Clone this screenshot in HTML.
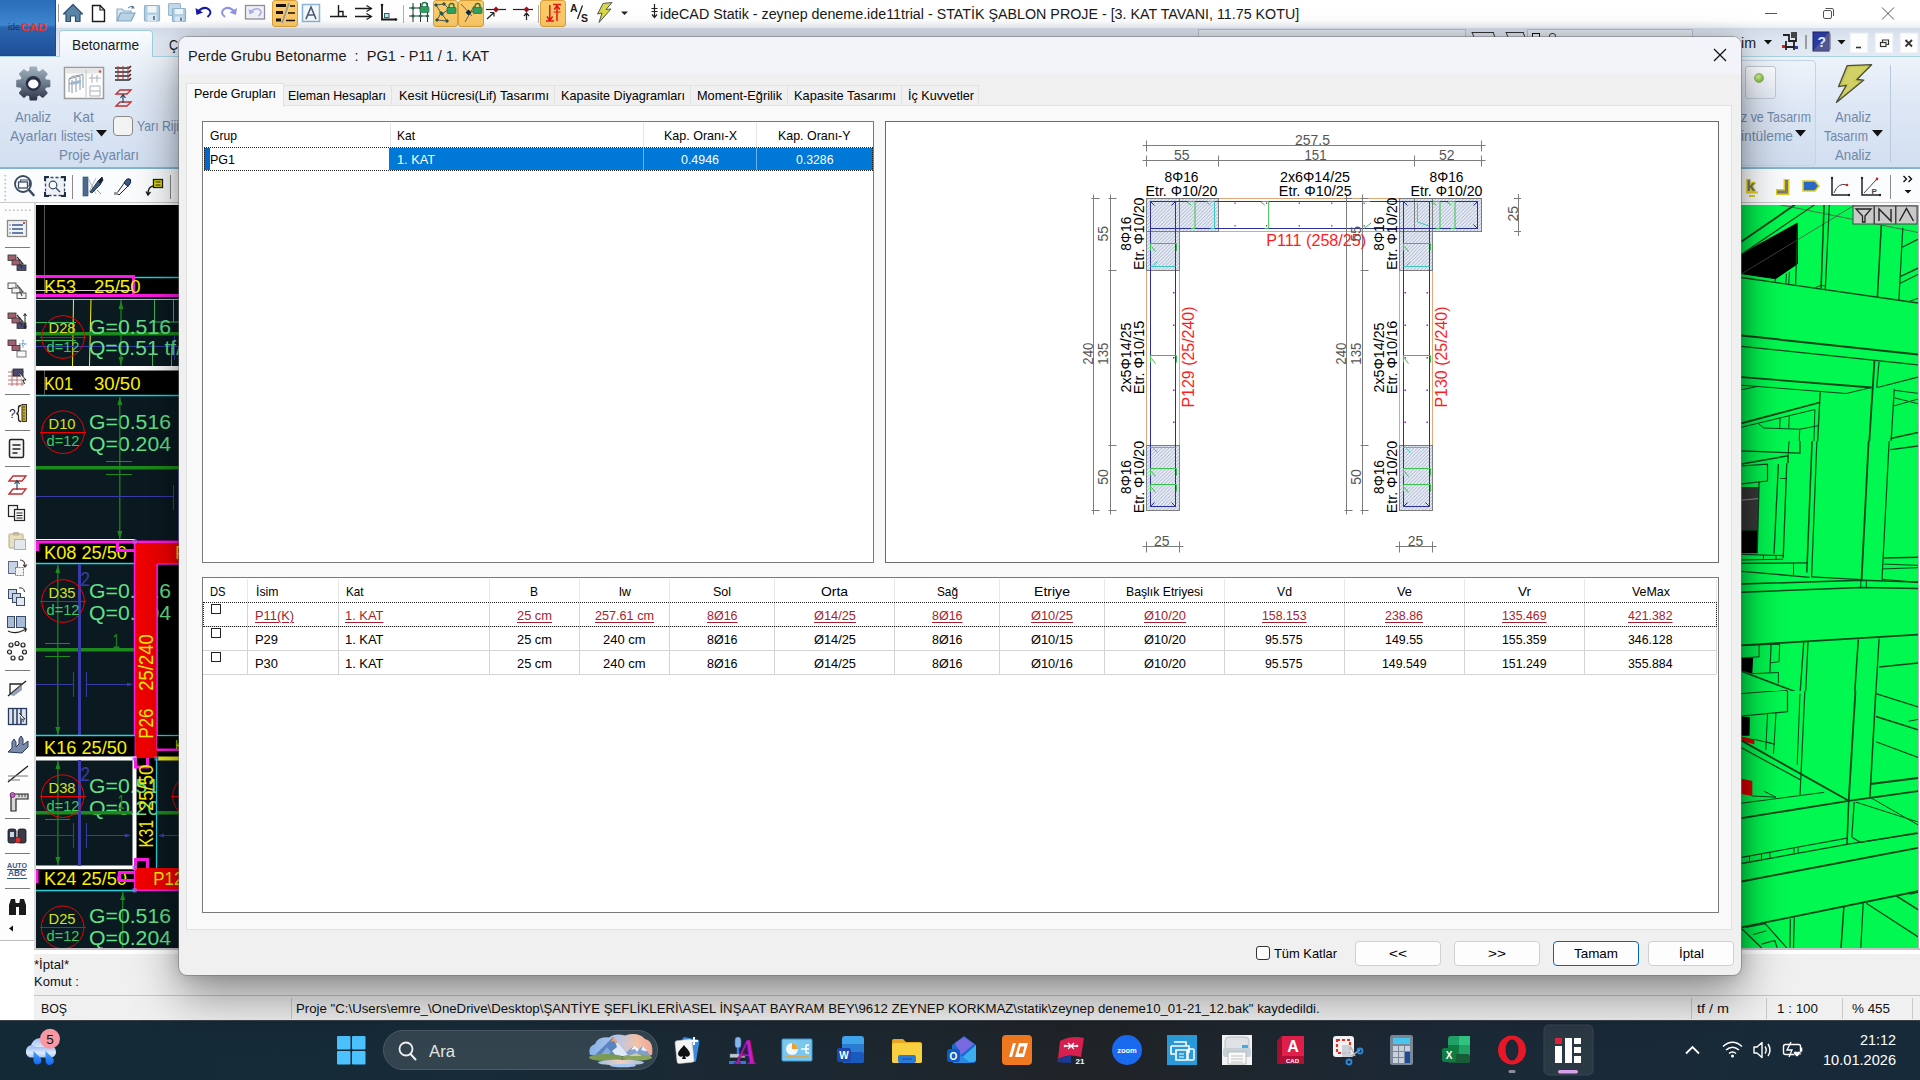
<!DOCTYPE html>
<html><head><meta charset="utf-8"><title>ideCAD Statik</title>
<style>
*{box-sizing:border-box;margin:0;padding:0}
html,body{width:1920px;height:1080px;overflow:hidden;background:#fff;font-family:"Liberation Sans",sans-serif;}
.abs{position:absolute}
#root{position:relative;width:1920px;height:1080px;overflow:hidden;background:#fff}
.t{position:absolute;white-space:pre;line-height:1;display:block}
svg{position:absolute;overflow:visible}
svg text{font-family:"Liberation Sans",sans-serif}
#titlebar{left:0;top:0;width:1920px;height:28px;background:linear-gradient(#ffffff 0%,#ffffff 72%,#eceff5 100%)}
#tabrow{left:0;top:28px;width:1920px;height:28px;background:linear-gradient(#d3dbe8 0%,#dde5f0 35%,#e3eaf4 100%)}
#ribbon{left:0;top:56px;width:1920px;height:113px;background:linear-gradient(#eef3fa 0%,#dfe8f5 40%,#d2dff1 100%);border-bottom:2px solid #86bacb}
#tb2{left:0;top:169px;width:1920px;height:36px;background:#fbfcfd}
#leftbar{left:0;top:203px;width:36px;height:746px;background:#fdfdfe}
#cad{left:36px;top:205px;width:143px;height:743px;background:#000;overflow:hidden}
#view3d{left:1741px;top:205px;width:177px;height:743px;background:#00f850;overflow:hidden}
#cmd{left:34px;top:954px;width:1886px;height:42px;background:#f0f0f0}
#status{left:34px;top:995px;width:1886px;height:25px;background:#f0f0f0;border-top:1px solid #c4c4c4}
#taskbar{left:0;top:1020px;width:1920px;height:60px;background:#1b2a35}
#dlg{left:179px;top:37px;width:1562px;height:938px;background:#f0f0f0;border-radius:8px;box-shadow:0 0 0 1px rgba(110,110,110,.5),0 22px 48px rgba(0,0,0,.40),0 0 16px rgba(0,0,0,.16);overflow:hidden}
#dlgtitle{left:0;top:0;width:1562px;height:37px;background:#f3f4f9}
</style></head>
<body><div id="root">
<div id="titlebar" class="abs"></div>
<div id="tabrow" class="abs"></div>
<div id="ribbon" class="abs"></div>
<div id="tb2" class="abs"></div>
<div id="leftbar" class="abs"></div>
<div id="cad" class="abs"><svg style="left:0;top:0" width="143" height="743" viewBox="36 205 143 743">
<rect x="36" y="298" width="143" height="68" fill="#0a1a20"/>
<rect x="36" y="396" width="143" height="144" fill="#0a1a20"/>
<rect x="36" y="564" width="99" height="171" fill="#0a1a20"/>
<rect x="36" y="760" width="97" height="106" fill="#0a1a20"/>
<rect x="157" y="760" width="22" height="108" fill="#0a1a20"/>
<rect x="36" y="891" width="143" height="57" fill="#0a1a20"/>
<path d="M44.5 205L44.5 298" stroke="#555" stroke-width="1" fill="none"/>
<path d="M44.5 370L44.5 396" stroke="#555" stroke-width="1" fill="none"/>
<path d="M44.5 541L44.5 564" stroke="#555" stroke-width="1" fill="none"/>
<path d="M44.5 736L44.5 757" stroke="#555" stroke-width="1" fill="none"/>
<path d="M44.5 869L44.5 890" stroke="#555" stroke-width="1" fill="none"/>
<path d="M36 290.5L134 290.5" stroke="#cfcfcf" stroke-width="1" fill="none"/>
<rect x="36" y="275" width="99" height="3" fill="#ff19e6"/>
<rect x="132" y="275" width="3" height="21" fill="#ff19e6"/>
<rect x="36" y="294" width="143" height="3" fill="#ff19e6"/>
<path d="M135 277.5L179 277.5" stroke="#1fd4e0" stroke-width="1.5" fill="none"/>
<text x="44.00" y="293.44" font-size="18" fill="#f8f000" text-anchor="start" textLength="32.0" lengthAdjust="spacingAndGlyphs">K53</text>
<text x="94.00" y="293.44" font-size="18" fill="#f8f000" text-anchor="start" textLength="46.5" lengthAdjust="spacingAndGlyphs">25/50</text>
<path d="M36 299.5L179 299.5" stroke="#bbb" stroke-width="1" fill="none"/>
<path d="M73.5 299L72.5 366" stroke="#f8f000" stroke-width="1" fill="none"/>
<path d="M91 299L89.5 366" stroke="#f8f000" stroke-width="1" fill="none"/>
<path d="M36 322.5L76 322.5" stroke="#39b85a" stroke-width="1" fill="none"/>
<path d="M36 340.5L76 340.5" stroke="#39b85a" stroke-width="1" fill="none"/>
<path d="M154.5 300L154.5 322" stroke="#39b85a" stroke-width="1" fill="none"/>
<path d="M154.5 322L179 322" stroke="#39b85a" stroke-width="1" fill="none"/>
<path d="M173.5 300L173.5 322" stroke="#39b85a" stroke-width="1" fill="none"/>
<path d="M152.5 345L152.5 366" stroke="#39b85a" stroke-width="1" fill="none"/>
<path d="M171.5 345L171.5 366" stroke="#39b85a" stroke-width="1" fill="none"/>
<rect x="36" y="332" width="143" height="3.5" fill="#1c8a1c"/>
<path d="M36 346.5L179 346.5" stroke="#3a3aa8" stroke-width="1" fill="none"/>
<path d="M174.5 335L174.5 360" stroke="#3a3aa8" stroke-width="1" fill="none"/>
<path d="M121 300L121 366" stroke="#1c8a1c" stroke-width="1.2" fill="none"/>
<path d="M121 301l-2.5 8h5zM121 365l-2.5 -8h5z" fill="#1c8a1c"/>
<circle cx="63" cy="337" r="21.3" fill="none" stroke="#f20000" stroke-width="1"/>
<path d="M40 337.5L86 337.5" stroke="#f20000" stroke-width="1" fill="none"/>
<text x="48.50" y="333.49" font-size="14.5" fill="#d8e020" text-anchor="start" textLength="27.0" lengthAdjust="spacingAndGlyphs">D28</text>
<text x="46.50" y="351.51" font-size="14" fill="#3cc864" text-anchor="start" textLength="33.0" lengthAdjust="spacingAndGlyphs">d=12</text>
<text x="89.00" y="333.98" font-size="19.5" fill="#63e087" text-anchor="start" textLength="82.0" lengthAdjust="spacingAndGlyphs">G=0.516</text>
<text x="89.00" y="355.28" font-size="19.5" fill="#63e087" text-anchor="start" textLength="93.0" lengthAdjust="spacingAndGlyphs">Q=0.51 tf/</text>
<rect x="36" y="366" width="143" height="4.5" fill="#fff"/>
<text x="44.00" y="389.94" font-size="18" fill="#f8f000" text-anchor="start" textLength="29.0" lengthAdjust="spacingAndGlyphs">K01</text>
<text x="94.00" y="389.94" font-size="18" fill="#f8f000" text-anchor="start" textLength="46.5" lengthAdjust="spacingAndGlyphs">30/50</text>
<path d="M36 395.5L179 395.5" stroke="#1fd4e0" stroke-width="1.3" fill="none"/>
<circle cx="63" cy="432.2" r="21.3" fill="none" stroke="#f20000" stroke-width="1"/>
<path d="M40 432.5L86 432.5" stroke="#f20000" stroke-width="1" fill="none"/>
<text x="48.50" y="428.89" font-size="14.5" fill="#d8e020" text-anchor="start" textLength="27.0" lengthAdjust="spacingAndGlyphs">D10</text>
<text x="46.50" y="446.21" font-size="14" fill="#3cc864" text-anchor="start" textLength="33.0" lengthAdjust="spacingAndGlyphs">d=12</text>
<text x="89.00" y="428.98" font-size="19.5" fill="#63e087" text-anchor="start" textLength="82.0" lengthAdjust="spacingAndGlyphs">G=0.516</text>
<text x="89.00" y="450.78" font-size="19.5" fill="#63e087" text-anchor="start" textLength="82.0" lengthAdjust="spacingAndGlyphs">Q=0.204</text>
<path d="M119.8 397L119.8 539" stroke="#1c8a1c" stroke-width="1.2" fill="none"/>
<path d="M119.8 397l-2.5 8h5zM119.8 539l-2.5 -8h5z" fill="#1c8a1c"/>
<rect x="36" y="466" width="143" height="3.5" fill="#1c8a1c"/>
<path d="M106 461.5L132 461.5" stroke="#1c8a1c" stroke-width="1" fill="none"/>
<path d="M106 474.5L132 474.5" stroke="#1c8a1c" stroke-width="1" fill="none"/>
<path d="M36 496.5L173.5 496.5" stroke="#3a3aa8" stroke-width="1" fill="none"/>
<path d="M173.5 485L173.5 510" stroke="#3a3aa8" stroke-width="1" fill="none"/>
<path d="M178.5 470L178.5 540" stroke="#3a3aa8" stroke-width="1" fill="none"/>
<rect x="36" y="540" width="143" height="24" fill="#000"/>
<path d="M36 539.5L135 539.5" stroke="#fff" stroke-width="1" fill="none"/>
<rect x="36" y="540.5" width="143" height="3" fill="#ff19e6"/>
<rect x="36" y="541" width="3" height="10" fill="#ff19e6"/>
<rect x="134.6" y="543" width="44.4" height="21" fill="#f20000"/>
<rect x="134.6" y="564" width="22.3" height="194" fill="#f20000"/>
<rect x="157" y="564" width="22" height="171" fill="#000"/>
<text x="44.00" y="559.24" font-size="18" fill="#f8f000" text-anchor="start" textLength="83.0" lengthAdjust="spacingAndGlyphs">K08 25/50</text>
<text x="175.50" y="559.24" font-size="18" fill="#f8f000" text-anchor="start" textLength="9.0" lengthAdjust="spacingAndGlyphs">P</text>
<path d="M117.5 543V550.5H135" fill="none" stroke="#ff19e6" stroke-width="3"/>
<path d="M36 563.5L135 563.5" stroke="#1fd4e0" stroke-width="1.3" fill="none"/>
<path d="M134.6 543L134.6 758" stroke="#ff19e6" stroke-width="1.5" fill="none"/>
<path d="M157 564L157 750" stroke="#ff19e6" stroke-width="1.5" fill="none"/>
<path d="M157 564L179 564" stroke="#ff19e6" stroke-width="1.5" fill="none"/>
<path d="M57.8 565L57.8 735" stroke="#1c8a1c" stroke-width="1.2" fill="none"/>
<path d="M57.8 565l-2.5 8h5zM57.8 735l-2.5 -8h5z" fill="#1c8a1c"/>
<path d="M45 643.5L70 643.5" stroke="#1c8a1c" stroke-width="1" fill="none"/>
<path d="M45 656.5L70 656.5" stroke="#1c8a1c" stroke-width="1" fill="none"/>
<rect x="36" y="648" width="98.6" height="3.5" fill="#1c8a1c"/>
<rect x="78" y="564" width="3" height="171" fill="#3a3aa8"/>
<text x="80.50" y="585.86" font-size="20" fill="#3a3aa8" text-anchor="start" textLength="9.5" lengthAdjust="spacingAndGlyphs">2</text>
<text x="112.50" y="648.28" font-size="19.5" fill="#1f7d1f" text-anchor="start" textLength="7.5" lengthAdjust="spacingAndGlyphs">1</text>
<path d="M36 684.5L73.5 684.5" stroke="#3a3aa8" stroke-width="1" fill="none"/>
<path d="M86.5 684.5L132 684.5" stroke="#3a3aa8" stroke-width="1" fill="none"/>
<path d="M73.5 672L73.5 697" stroke="#3a3aa8" stroke-width="1" fill="none"/>
<path d="M86.5 672L86.5 697" stroke="#3a3aa8" stroke-width="1" fill="none"/>
<path d="M133 684.5l-6 -2v4z" fill="#3a3aa8"/>
<circle cx="63" cy="601" r="21.3" fill="none" stroke="#f20000" stroke-width="1"/>
<path d="M40 601.5L86 601.5" stroke="#f20000" stroke-width="1" fill="none"/>
<text x="48.50" y="598.19" font-size="14.5" fill="#d8e020" text-anchor="start" textLength="27.0" lengthAdjust="spacingAndGlyphs">D35</text>
<text x="46.50" y="615.31" font-size="14" fill="#3cc864" text-anchor="start" textLength="33.0" lengthAdjust="spacingAndGlyphs">d=12</text>
<text x="89.00" y="597.98" font-size="19.5" fill="#63e087" text-anchor="start" textLength="82.0" lengthAdjust="spacingAndGlyphs">G=0.516</text><text x="89.00" y="619.68" font-size="19.5" fill="#63e087" text-anchor="start" textLength="82.0" lengthAdjust="spacingAndGlyphs">Q=0.204</text>
<rect x="134.6" y="564" width="22.3" height="194" fill="#f20000"/>
<path d="M134.6 543L134.6 758" stroke="#ff19e6" stroke-width="1.5" fill="none"/>
<path d="M157 564L157 750" stroke="#ff19e6" stroke-width="1.5" fill="none"/>
<text x="145.50" y="730.76" font-size="20" fill="#f8f000" text-anchor="middle" textLength="30.5" lengthAdjust="spacingAndGlyphs" transform="rotate(-90 145.50 723.60)">P26</text>
<text x="145.50" y="669.66" font-size="20" fill="#f8f000" text-anchor="middle" textLength="56.5" lengthAdjust="spacingAndGlyphs" transform="rotate(-90 145.50 662.50)">25/240</text>
<rect x="36" y="736" width="98.6" height="21" fill="#000"/>
<path d="M36 735.5L134.6 735.5" stroke="#1fd4e0" stroke-width="1.3" fill="none"/>
<text x="44.00" y="753.94" font-size="18" fill="#f8f000" text-anchor="start" textLength="83.0" lengthAdjust="spacingAndGlyphs">K16 25/50</text>
<rect x="157" y="736" width="22" height="24" fill="#000"/>
<path d="M157 735.5L179 735.5" stroke="#1fd4e0" stroke-width="1.3" fill="none"/>
<rect x="157" y="748.5" width="22" height="2.5" fill="#ff19e6"/>
<rect x="158" y="756.5" width="21" height="4" fill="#e8e820"/>
<text x="175.50" y="749.30" font-size="12" fill="#f8f000" text-anchor="start" textLength="5.0" lengthAdjust="spacingAndGlyphs">k</text>
<rect x="136.5" y="758" width="19.5" height="110" fill="#000"/>
<clipPath id="c4"><rect x="36" y="760" width="120" height="106"/></clipPath>
<g clip-path="url(#c4)"><text x="89.00" y="792.98" font-size="19.5" fill="#63e087" text-anchor="start" textLength="82.0" lengthAdjust="spacingAndGlyphs">G=0.516</text><text x="89.00" y="814.98" font-size="19.5" fill="#63e087" text-anchor="start" textLength="82.0" lengthAdjust="spacingAndGlyphs">Q=0.204</text></g>
<rect x="36" y="756.5" width="100" height="4" fill="#fff"/>
<rect x="132.5" y="756.5" width="4" height="113" fill="#fff"/>
<rect x="36" y="865.5" width="100" height="4" fill="#fff"/>
<path d="M156.5 758L156.5 868" stroke="#1fd4e0" stroke-width="1.3" fill="none"/>
<path d="M135.5 758V767H147.5V758" fill="none" stroke="#ff19e6" stroke-width="3"/>
<path d="M135.5 868V859.5H147.5V868" fill="none" stroke="#ff19e6" stroke-width="3"/>
<path d="M57.9 761L57.9 865" stroke="#1c8a1c" stroke-width="1.2" fill="none"/>
<path d="M57.9 761l-2.5 8h5zM57.9 865l-2.5 -8h5z" fill="#1c8a1c"/>
<path d="M45 819.5L70 819.5" stroke="#1c8a1c" stroke-width="1" fill="none"/>
<rect x="36" y="811" width="96.5" height="3.5" fill="#1c8a1c"/>
<rect x="157" y="811" width="22" height="3.5" fill="#1c8a1c"/>
<rect x="78" y="760" width="3" height="106" fill="#3a3aa8"/>
<text x="80.50" y="781.16" font-size="20" fill="#3a3aa8" text-anchor="start" textLength="9.5" lengthAdjust="spacingAndGlyphs">2</text>
<text x="117.60" y="808.98" font-size="19.5" fill="#1f7d1f" text-anchor="start" textLength="7.5" lengthAdjust="spacingAndGlyphs">1</text>
<path d="M36 835.5L73.5 835.5" stroke="#3a3aa8" stroke-width="1" fill="none"/>
<path d="M86.5 835.5L130 835.5" stroke="#3a3aa8" stroke-width="1" fill="none"/>
<path d="M73.5 823L73.5 848" stroke="#3a3aa8" stroke-width="1" fill="none"/>
<path d="M86.5 823L86.5 848" stroke="#3a3aa8" stroke-width="1" fill="none"/>
<path d="M131 835.5l-6 -2v4z" fill="#3a3aa8"/>
<path d="M160 835.5L179 835.5" stroke="#3a3aa8" stroke-width="1" fill="none"/>
<path d="M158 835.5l6 -2v4z" fill="#3a3aa8"/>
<circle cx="62.6" cy="796.2" r="21.3" fill="none" stroke="#f20000" stroke-width="1"/>
<path d="M40 796.5L86 796.5" stroke="#f20000" stroke-width="1" fill="none"/>
<circle cx="194" cy="796.2" r="21.3" fill="none" stroke="#f20000" stroke-width="1"/>
<path d="M171 796.5L179 796.5" stroke="#f20000" stroke-width="1" fill="none"/>
<text x="48.50" y="793.19" font-size="14.5" fill="#d8e020" text-anchor="start" textLength="27.0" lengthAdjust="spacingAndGlyphs">D38</text>
<text x="46.50" y="810.51" font-size="14" fill="#3cc864" text-anchor="start" textLength="33.0" lengthAdjust="spacingAndGlyphs">d=12</text>
<text x="145.50" y="840.86" font-size="20" fill="#f8f000" text-anchor="middle" textLength="27.4" lengthAdjust="spacingAndGlyphs" transform="rotate(-90 145.50 833.70)">K31</text>
<text x="145.50" y="794.96" font-size="20" fill="#f8f000" text-anchor="middle" textLength="46.6" lengthAdjust="spacingAndGlyphs" transform="rotate(-90 145.50 787.80)">25/50</text>
<rect x="36" y="869.5" width="98.6" height="21" fill="#000"/>
<rect x="36" y="870" width="2.5" height="13" fill="#ff19e6"/>
<text x="44.00" y="884.94" font-size="18" fill="#f8f000" text-anchor="start" textLength="83.0" lengthAdjust="spacingAndGlyphs">K24 25/50</text>
<rect x="134.6" y="868" width="44.4" height="22.5" fill="#f20000"/>
<path d="M134.6 868L134.6 891" stroke="#ff19e6" stroke-width="1.5" fill="none"/>
<path d="M134.6 890.3L179 890.3" stroke="#ff19e6" stroke-width="1.5" fill="none"/>
<path d="M134.6 872.5H119.5V880.5H134.6" fill="none" stroke="#ff19e6" stroke-width="3"/>
<text x="153.30" y="884.94" font-size="18" fill="#f8f000" text-anchor="start" textLength="30.0" lengthAdjust="spacingAndGlyphs">P12</text>
<path d="M36 890.5L134.6 890.5" stroke="#1fd4e0" stroke-width="1.3" fill="none"/>
<path d="M122.7 892L122.7 948" stroke="#1c8a1c" stroke-width="1.2" fill="none"/>
<path d="M122.7 892l-2.5 8h5z" fill="#1c8a1c"/>
<circle cx="62.6" cy="927.3" r="21.3" fill="none" stroke="#f20000" stroke-width="1"/>
<path d="M40 927.5L86 927.5" stroke="#f20000" stroke-width="1" fill="none"/>
<text x="48.50" y="923.69" font-size="14.5" fill="#d8e020" text-anchor="start" textLength="27.0" lengthAdjust="spacingAndGlyphs">D25</text>
<text x="46.50" y="941.01" font-size="14" fill="#3cc864" text-anchor="start" textLength="33.0" lengthAdjust="spacingAndGlyphs">d=12</text>
<text x="89.00" y="923.48" font-size="19.5" fill="#63e087" text-anchor="start" textLength="82.0" lengthAdjust="spacingAndGlyphs">G=0.516</text>
<text x="89.00" y="945.48" font-size="19.5" fill="#63e087" text-anchor="start" textLength="82.0" lengthAdjust="spacingAndGlyphs">Q=0.204</text>
<rect x="133.1" y="757.0" width="3" height="3" fill="none" stroke="#a070e0" stroke-width="1"/>
<rect x="155.0" y="757.0" width="3" height="3" fill="none" stroke="#a070e0" stroke-width="1"/>
<rect x="133.1" y="866.5" width="3" height="3" fill="none" stroke="#a070e0" stroke-width="1"/>
<rect x="133.1" y="888.8" width="3" height="3" fill="none" stroke="#a070e0" stroke-width="1"/>
<rect x="133.1" y="540.0" width="3" height="3" fill="none" stroke="#a070e0" stroke-width="1"/>
</svg></div>
<div id="view3d" class="abs"><svg style="left:0;top:0" width="177" height="743" viewBox="1741 205 177 743">
<defs><linearGradient id="gsh" x1="0" x2="1" y1="0" y2="0"><stop offset="0" stop-color="#000" stop-opacity=".12"/><stop offset="0.5" stop-color="#000" stop-opacity=".03"/><stop offset="1" stop-color="#000" stop-opacity="0"/></linearGradient></defs>
<clipPath id="vc1"><rect x="1741" y="205" width="177" height="236"/></clipPath><clipPath id="vc2"><rect x="1741" y="441" width="177" height="250"/></clipPath><clipPath id="vc3"><rect x="1741" y="691" width="177" height="257"/></clipPath>
<g clip-path="url(#vc1)">
<path d="M1741.2 254.4L1797.5 223.1L1797.5 263.7L1775.5 278.7L1741.2 273.6Z" stroke="#000" stroke-width="1" fill="#000" stroke-linejoin="round"/>
<path d="M1741.2 241.7L1795.2 204.6" stroke="#05451a" stroke-width="1.8" fill="none" stroke-linejoin="round"/>
<path d="M1741.2 254.4L1814.9 204.6" stroke="#05451a" stroke-width="1.2" fill="none" stroke-linejoin="round"/>
<path d="M1741.2 274.1L1855.4 204.6" stroke="#5a4a4a" stroke-width="0.8" fill="none" stroke-linejoin="round"/>
<path d="M1779.0 204.6L1917.9 232.4" stroke="#5a4a4a" stroke-width="0.8" fill="none" stroke-linejoin="round"/>
<path d="M1824.1 204.6L1821.1 288.0" stroke="#05451a" stroke-width="1.5" fill="none" stroke-linejoin="round"/>
<path d="M1829.4 204.6L1825.3 289.1" stroke="#05451a" stroke-width="1.2" fill="none" stroke-linejoin="round"/>
<path d="M1797.5 223.1L1795.6 284.5" stroke="#05451a" stroke-width="1.2" fill="none" stroke-linejoin="round"/>
<path d="M1775.5 278.7L1774.8 282.9" stroke="#05451a" stroke-width="1" fill="none" stroke-linejoin="round"/>
<path d="M1786.4 273.6L1785.9 283.8" stroke="#05451a" stroke-width="1" fill="none" stroke-linejoin="round"/>
<path d="M1789.4 271.8L1788.7 284.3" stroke="#05451a" stroke-width="1" fill="none" stroke-linejoin="round"/>
<path d="M1741.2 277.5L1917.9 303.0" stroke="#05451a" stroke-width="1.3" fill="none" stroke-linejoin="round"/>
<path d="M1814.9 288.0L1821.1 285.2L1825.3 286.1" stroke="#05451a" stroke-width="1" fill="none" stroke-linejoin="round"/>
<path d="M1881.3 225.5L1877.4 297.2" stroke="#05451a" stroke-width="1.5" fill="none" stroke-linejoin="round"/>
<path d="M1902.8 227.8L1898.9 300.0" stroke="#05451a" stroke-width="1.2" fill="none" stroke-linejoin="round"/>
<path d="M1901.7 247.5L1917.9 239.4" stroke="#05451a" stroke-width="1.2" fill="none" stroke-linejoin="round"/>
<path d="M1900.7 276.4L1917.9 268.3" stroke="#05451a" stroke-width="1.5" fill="none" stroke-linejoin="round"/>
<path d="M1900.3 283.3L1917.9 274.5" stroke="#05451a" stroke-width="1.2" fill="none" stroke-linejoin="round"/>
<path d="M1907.5 301.9L1917.9 298.4" stroke="#05451a" stroke-width="1" fill="none" stroke-linejoin="round"/>
<path d="M1741.2 335.4L1917.9 354.6" stroke="#05451a" stroke-width="2" fill="none" stroke-linejoin="round"/>
<path d="M1741.2 346.3L1917.9 364.8" stroke="#05451a" stroke-width="1.2" fill="none" stroke-linejoin="round"/>
<path d="M1741.2 377.1L1871.6 387.5" stroke="#05451a" stroke-width="1.8" fill="none" stroke-linejoin="round"/>
<path d="M1741.2 385.2L1846.1 393.5L1871.6 387.5" stroke="#05451a" stroke-width="1" fill="none" stroke-linejoin="round"/>
<path d="M1874.4 360.9L1868.8 450.0" stroke="#05451a" stroke-width="1.8" fill="none" stroke-linejoin="round"/>
<path d="M1879.0 362.0L1876.7 387.5" stroke="#05451a" stroke-width="1.2" fill="none" stroke-linejoin="round"/>
<path d="M1877.4 387.5L1917.9 377.1" stroke="#05451a" stroke-width="1.2" fill="none" stroke-linejoin="round"/>
<path d="M1741.2 389.8L1758.1 386.3" stroke="#05451a" stroke-width="1" fill="none" stroke-linejoin="round"/>
<path d="M1820.2 392.1L1817.2 450.0" stroke="#05451a" stroke-width="1.3" fill="none" stroke-linejoin="round"/>
<path d="M1741.2 423.4L1819.5 402.5" stroke="#05451a" stroke-width="1.8" fill="none" stroke-linejoin="round"/>
<path d="M1741.2 427.3L1814.9 409.5" stroke="#05451a" stroke-width="1" fill="none" stroke-linejoin="round"/>
<path d="M1814.9 409.5L1813.7 450.0" stroke="#05451a" stroke-width="1" fill="none" stroke-linejoin="round"/>
<path d="M1780.1 417.6L1779.7 428.0" stroke="#05451a" stroke-width="1" fill="none" stroke-linejoin="round"/>
<path d="M1789.4 415.3L1788.7 428.0" stroke="#05451a" stroke-width="1" fill="none" stroke-linejoin="round"/>
<path d="M1758.1 423.4L1763.9 428.0L1799.8 429.2L1818.3 425.7" stroke="#05451a" stroke-width="1" fill="none" stroke-linejoin="round"/>
<path d="M1799.8 429.2L1798.7 450.0" stroke="#05451a" stroke-width="1" fill="none" stroke-linejoin="round"/>
<path d="M1894.3 388.7L1890.6 450.0" stroke="#05451a" stroke-width="1.2" fill="none" stroke-linejoin="round"/>
<path d="M1894.3 390.3L1917.9 393.3" stroke="#05451a" stroke-width="1" fill="none" stroke-linejoin="round"/>
<path d="M1894.7 397.9L1917.9 403.7" stroke="#05451a" stroke-width="1" fill="none" stroke-linejoin="round"/>
<path d="M1893.6 406.0L1917.9 399.1" stroke="#05451a" stroke-width="1" fill="none" stroke-linejoin="round"/>
<path d="M1890.6 438.4L1917.9 432.6" stroke="#05451a" stroke-width="1.5" fill="none" stroke-linejoin="round"/>
<path d="M1891.2 443.1L1917.9 445.4" stroke="#05451a" stroke-width="1" fill="none" stroke-linejoin="round"/>
</g><g clip-path="url(#vc2)">
<path d="M1741.5 487.0L1759.1 487.0L1757.9 530.3L1741.5 530.3Z" stroke="none" stroke-width="0" fill="#3a3a3a" stroke-linejoin="round"/>
<path d="M1741.5 530.3L1757.9 530.3L1757.2 553.2L1741.5 553.2Z" stroke="none" stroke-width="0" fill="#000" stroke-linejoin="round"/>
<path d="M1741.5 500.2L1759.1 498.5" stroke="#999" stroke-width="1" fill="none" stroke-linejoin="round"/>
<path d="M1812.1 440.0L1806.8 572.5" stroke="#05451a" stroke-width="1.5" fill="none" stroke-linejoin="round"/>
<path d="M1816.9 440.0L1811.6 577.3" stroke="#05451a" stroke-width="1.2" fill="none" stroke-linejoin="round"/>
<path d="M1868.7 440.0L1861.5 580.9" stroke="#05451a" stroke-width="1.8" fill="none" stroke-linejoin="round"/>
<path d="M1889.2 440.0L1882.0 579.7" stroke="#05451a" stroke-width="1.2" fill="none" stroke-linejoin="round"/>
<path d="M1890.4 449.6L1918.1 446.0" stroke="#05451a" stroke-width="1.3" fill="none" stroke-linejoin="round"/>
<path d="M1741.5 450.8L1800.0 453.2L1800.0 440.0" stroke="#05451a" stroke-width="1.2" fill="none" stroke-linejoin="round"/>
<path d="M1741.5 464.1L1788.0 455.7L1788.0 462.9" stroke="#05451a" stroke-width="1.5" fill="none" stroke-linejoin="round"/>
<path d="M1741.5 466.0L1767.5 464.1L1767.5 481.0L1741.5 483.8" stroke="#05451a" stroke-width="1.2" fill="none" stroke-linejoin="round"/>
<path d="M1788.0 455.7L1789.2 440.0" stroke="#05451a" stroke-width="1" fill="none" stroke-linejoin="round"/>
<path d="M1759.1 481.0L1757.2 553.2" stroke="#05451a" stroke-width="1.3" fill="none" stroke-linejoin="round"/>
<path d="M1778.4 464.1L1774.0 553.7" stroke="#05451a" stroke-width="1.3" fill="none" stroke-linejoin="round"/>
<path d="M1786.8 462.9L1783.2 558.0" stroke="#05451a" stroke-width="1.3" fill="none" stroke-linejoin="round"/>
<path d="M1780.3 478.5L1786.8 478.5" stroke="#05451a" stroke-width="1" fill="none" stroke-linejoin="round"/>
<path d="M1741.5 554.4L1783.2 555.6" stroke="#05451a" stroke-width="1.2" fill="none" stroke-linejoin="round"/>
<path d="M1741.5 560.0L1783.2 559.2" stroke="#05451a" stroke-width="1" fill="none" stroke-linejoin="round"/>
<path d="M1763.4 555.2L1763.4 559.5" stroke="#05451a" stroke-width="1" fill="none" stroke-linejoin="round"/>
<path d="M1776.0 555.2L1776.0 559.5" stroke="#05451a" stroke-width="1" fill="none" stroke-linejoin="round"/>
<path d="M1741.5 563.3L1807.3 562.9" stroke="#05451a" stroke-width="1.3" fill="none" stroke-linejoin="round"/>
<path d="M1793.5 563.3L1793.5 574.9" stroke="#05451a" stroke-width="1" fill="none" stroke-linejoin="round"/>
<path d="M1741.5 571.3L1809.7 577.3" stroke="#05451a" stroke-width="1.3" fill="none" stroke-linejoin="round"/>
<path d="M1811.6 576.8L1861.5 579.7" stroke="#05451a" stroke-width="1.3" fill="none" stroke-linejoin="round"/>
<path d="M1741.5 584.1L1861.5 580.2L1918.1 582.1" stroke="#05451a" stroke-width="1.5" fill="none" stroke-linejoin="round"/>
<path d="M1741.5 592.3L1861.5 587.4L1918.1 588.4" stroke="#05451a" stroke-width="1.5" fill="none" stroke-linejoin="round"/>
<path d="M1860.8 580.9L1860.8 587.4" stroke="#05451a" stroke-width="1" fill="none" stroke-linejoin="round"/>
<path d="M1866.3 580.9L1866.3 587.4" stroke="#05451a" stroke-width="1" fill="none" stroke-linejoin="round"/>
<path d="M1883.9 558.0L1918.1 557.3" stroke="#05451a" stroke-width="1.5" fill="none" stroke-linejoin="round"/>
<path d="M1883.9 564.1L1918.1 565.3" stroke="#05451a" stroke-width="1" fill="none" stroke-linejoin="round"/>
<path d="M1883.2 568.9L1918.1 567.7" stroke="#05451a" stroke-width="1" fill="none" stroke-linejoin="round"/>
<path d="M1882.0 579.2L1918.1 582.6" stroke="#05451a" stroke-width="1" fill="none" stroke-linejoin="round"/>
<path d="M1741.5 645.3L1918.1 634.7" stroke="#05451a" stroke-width="1.8" fill="none" stroke-linejoin="round"/>
<path d="M1803.7 642.4L1800.0 694.2" stroke="#05451a" stroke-width="1.3" fill="none" stroke-linejoin="round"/>
<path d="M1808.0 641.9L1805.3 700.2" stroke="#05451a" stroke-width="1.2" fill="none" stroke-linejoin="round"/>
<path d="M1858.3 639.5L1854.2 700.2" stroke="#05451a" stroke-width="1.5" fill="none" stroke-linejoin="round"/>
<path d="M1879.1 638.5L1875.4 700.2" stroke="#05451a" stroke-width="1.3" fill="none" stroke-linejoin="round"/>
<path d="M1879.1 666.9L1918.1 663.1" stroke="#05451a" stroke-width="1.5" fill="none" stroke-linejoin="round"/>
<path d="M1741.5 658.0L1753.1 658.0L1752.3 673.7L1741.5 670.8Z" stroke="none" stroke-width="0" fill="#000" stroke-linejoin="round"/>
<path d="M1741.5 645.3L1779.6 644.3L1779.1 661.6L1771.1 662.8" stroke="#05451a" stroke-width="1" fill="none" stroke-linejoin="round"/>
<path d="M1771.1 644.8L1769.9 672.5" stroke="#05451a" stroke-width="1.2" fill="none" stroke-linejoin="round"/>
<path d="M1759.1 645.3L1759.1 656.8L1741.5 658.0" stroke="#05451a" stroke-width="1" fill="none" stroke-linejoin="round"/>
<path d="M1741.5 671.3L1800.0 693.4" stroke="#05451a" stroke-width="1.5" fill="none" stroke-linejoin="round"/>
<path d="M1752.3 673.7L1778.4 672.5L1778.4 683.3" stroke="#05451a" stroke-width="1" fill="none" stroke-linejoin="round"/>
<path d="M1741.5 695.4L1786.8 690.5L1786.8 700.2" stroke="#05451a" stroke-width="1.2" fill="none" stroke-linejoin="round"/>
<path d="M1875.9 691.7L1918.1 700.2" stroke="#05451a" stroke-width="1" fill="none" stroke-linejoin="round"/>
</g><g clip-path="url(#vc3)">
<path d="M1741.5 716.5L1749.9 717.0L1749.5 735.8L1741.5 735.8Z" stroke="none" stroke-width="0" fill="#000" stroke-linejoin="round"/>
<path d="M1741.5 736.5L1754.3 739.4L1754.3 744.2L1741.5 741.1Z" stroke="none" stroke-width="0" fill="#e00000" stroke-linejoin="round"/>
<path d="M1741.5 778.7L1752.3 781.1L1752.3 796.0L1741.5 794.1Z" stroke="none" stroke-width="0" fill="#e00000" stroke-linejoin="round"/>
<path d="M1855.5 690.0L1848.7 800.8" stroke="#05451a" stroke-width="1.8" fill="none" stroke-linejoin="round"/>
<path d="M1875.9 690.0L1869.9 797.2" stroke="#05451a" stroke-width="1.5" fill="none" stroke-linejoin="round"/>
<path d="M1804.9 690.0L1800.0 796.0" stroke="#05451a" stroke-width="1.2" fill="none" stroke-linejoin="round"/>
<path d="M1800.0 693.6L1797.2 764.7" stroke="#05451a" stroke-width="1" fill="none" stroke-linejoin="round"/>
<path d="M1741.5 693.6L1787.5 690.0" stroke="#05451a" stroke-width="1" fill="none" stroke-linejoin="round"/>
<path d="M1787.5 690.0L1787.5 711.7L1741.5 716.0" stroke="#05451a" stroke-width="1.2" fill="none" stroke-linejoin="round"/>
<path d="M1767.5 714.1L1765.8 750.2" stroke="#05451a" stroke-width="1" fill="none" stroke-linejoin="round"/>
<path d="M1776.0 712.9L1773.5 753.8" stroke="#05451a" stroke-width="1" fill="none" stroke-linejoin="round"/>
<path d="M1754.3 739.4L1774.7 744.2L1765.8 741.8" stroke="#05451a" stroke-width="1" fill="none" stroke-linejoin="round"/>
<path d="M1741.5 740.6L1848.7 800.8" stroke="#05451a" stroke-width="1.8" fill="none" stroke-linejoin="round"/>
<path d="M1741.5 747.8L1800.0 779.6" stroke="#05451a" stroke-width="1.2" fill="none" stroke-linejoin="round"/>
<path d="M1741.5 803.2L1824.1 792.4" stroke="#05451a" stroke-width="1" fill="none" stroke-linejoin="round"/>
<path d="M1752.3 796.0L1776.0 797.2L1763.9 791.2" stroke="#05451a" stroke-width="1" fill="none" stroke-linejoin="round"/>
<path d="M1741.5 818.2L1848.7 800.8L1918.1 791.2" stroke="#05451a" stroke-width="1.8" fill="none" stroke-linejoin="round"/>
<path d="M1870.4 784.0L1918.1 777.9" stroke="#05451a" stroke-width="2" fill="none" stroke-linejoin="round"/>
<path d="M1869.9 797.2L1918.1 824.9" stroke="#05451a" stroke-width="1" fill="none" stroke-linejoin="round"/>
<path d="M1875.9 693.6L1918.1 706.9" stroke="#05451a" stroke-width="1.2" fill="none" stroke-linejoin="round"/>
<path d="M1875.9 716.5L1918.1 729.7" stroke="#05451a" stroke-width="1.5" fill="none" stroke-linejoin="round"/>
<path d="M1875.9 741.8L1918.1 757.5" stroke="#05451a" stroke-width="1.2" fill="none" stroke-linejoin="round"/>
<path d="M1908.5 721.3L1918.1 719.4" stroke="#05451a" stroke-width="1" fill="none" stroke-linejoin="round"/>
<path d="M1848.7 800.8L1847.0 844.2" stroke="#05451a" stroke-width="1.5" fill="none" stroke-linejoin="round"/>
<path d="M1854.2 802.0L1851.8 837.4" stroke="#05451a" stroke-width="1.2" fill="none" stroke-linejoin="round"/>
<path d="M1855.5 802.0L1918.1 822.0" stroke="#05451a" stroke-width="1" fill="none" stroke-linejoin="round"/>
<path d="M1852.3 837.4L1860.3 842.3L1916.9 832.9" stroke="#05451a" stroke-width="1.2" fill="none" stroke-linejoin="round"/>
<path d="M1741.5 857.4L1847.0 838.2" stroke="#05451a" stroke-width="1.2" fill="none" stroke-linejoin="round"/>
<path d="M1741.5 863.5L1848.2 844.2L1918.1 833.3" stroke="#05451a" stroke-width="1.3" fill="none" stroke-linejoin="round"/>
<path d="M1749.5 856.2L1749.5 861.5" stroke="#05451a" stroke-width="1" fill="none" stroke-linejoin="round"/>
<path d="M1761.5 853.8L1761.5 859.4" stroke="#05451a" stroke-width="1" fill="none" stroke-linejoin="round"/>
<path d="M1769.9 852.6L1769.9 857.9" stroke="#05451a" stroke-width="1" fill="none" stroke-linejoin="round"/>
<path d="M1794.0 847.8L1794.0 853.8" stroke="#05451a" stroke-width="1" fill="none" stroke-linejoin="round"/>
<path d="M1798.1 847.1L1798.1 853.1" stroke="#05451a" stroke-width="1" fill="none" stroke-linejoin="round"/>
<path d="M1741.5 881.5L1918.1 847.8" stroke="#05451a" stroke-width="1.8" fill="none" stroke-linejoin="round"/>
<path d="M1741.5 927.3L1918.1 891.2" stroke="#05451a" stroke-width="1.8" fill="none" stroke-linejoin="round"/>
<path d="M1790.4 918.9L1789.9 947.8" stroke="#05451a" stroke-width="1.2" fill="none" stroke-linejoin="round"/>
<path d="M1794.3 917.7L1793.5 947.8" stroke="#05451a" stroke-width="1.2" fill="none" stroke-linejoin="round"/>
<path d="M1843.9 906.8L1841.0 947.8" stroke="#05451a" stroke-width="1.5" fill="none" stroke-linejoin="round"/>
<path d="M1863.2 903.2L1860.8 947.8" stroke="#05451a" stroke-width="1.2" fill="none" stroke-linejoin="round"/>
<path d="M1866.3 903.2L1918.1 936.9" stroke="#05451a" stroke-width="1.2" fill="none" stroke-linejoin="round"/>
<path d="M1896.4 896.0L1918.1 909.7" stroke="#05451a" stroke-width="1.5" fill="none" stroke-linejoin="round"/>
<path d="M1909.7 894.3L1918.1 892.4" stroke="#05451a" stroke-width="1" fill="none" stroke-linejoin="round"/>
<path d="M1741.5 928.5L1761.5 947.8" stroke="#05451a" stroke-width="1.3" fill="none" stroke-linejoin="round"/>
<path d="M1745.8 927.3L1765.1 923.7L1786.8 947.8" stroke="#05451a" stroke-width="1.2" fill="none" stroke-linejoin="round"/>
<path d="M1753.1 934.5L1766.3 930.9" stroke="#05451a" stroke-width="1" fill="none" stroke-linejoin="round"/>
<path d="M1761.5 944.2L1774.7 940.5L1777.2 947.8" stroke="#05451a" stroke-width="1.2" fill="none" stroke-linejoin="round"/>
</g>
<rect x="1741" y="205" width="34" height="743" fill="url(#gsh)"/>
<rect x="1853" y="206" width="21" height="18" fill="#c9c9c9" stroke="#444" stroke-width="1"/>
<rect x="1874.5" y="206" width="21" height="18" fill="#c9c9c9" stroke="#444" stroke-width="1"/>
<rect x="1896" y="206" width="21" height="18" fill="#c9c9c9" stroke="#444" stroke-width="1"/>
<path d="M1856 209H1871L1865 216V222H1862.5V216Z" fill="none" stroke="#222" stroke-width="1.3"/>
<path d="M1879 221V209L1891 221V209" fill="none" stroke="#222" stroke-width="1.4"/>
<path d="M1899.5 221L1906.5 208.5L1913.5 221" fill="none" stroke="#222" stroke-width="1.4"/>
</svg></div>
<div id="cmd" class="abs"></div>
<div id="status" class="abs"></div>
<div id="taskbar" class="abs"><div class="abs" style="left:0px;top:0px;width:1920px;height:60px;background:linear-gradient(90deg,#132a36 0%,#172b38 25%,#1d262e 48%,#202327 57%,#1b2936 75%,#172a3a 100%)"></div>
<div class="abs" style="left:0px;top:0px;width:1920px;height:1px;background:#3a4148"></div>
<svg style="left:0;top:0" width="1920" height="60" viewBox="0 0 1920 60"><defs><linearGradient id="cl" x1="0" y1="0" x2="0" y2="1"><stop offset="0" stop-color="#9fc0f4"/><stop offset="0.55" stop-color="#dfe9fb"/><stop offset="1" stop-color="#a9c6f4"/></linearGradient><linearGradient id="dr" x1="0" y1="0" x2="0" y2="1"><stop offset="0" stop-color="#4aa0ff"/><stop offset="1" stop-color="#1468f0"/></linearGradient></defs><g><circle cx="40" cy="27" r="9" fill="url(#cl)"/><circle cx="32" cy="31" r="6" fill="url(#cl)"/><circle cx="49" cy="31" r="6.500" fill="url(#cl)"/><rect x="26" y="27" width="30" height="10.500" rx="5.200" fill="url(#cl)"/><path d="M33.500 31L41 38.500a4 4 0 1 1-7.500 2Z" fill="url(#dr)"/><path d="M45.500 31L53.500 39a4.200 4.200 0 1 1-8 2Z" fill="url(#dr)"/><circle cx="50" cy="18.700" r="10" fill="#f898a4"/></g><text x="50" y="23.500" font-size="13.500" fill="#111" text-anchor="middle">5</text><g fill="#4cc2ff"><rect x="337" y="16" width="13.500" height="13.500" rx="1"/><rect x="352" y="16" width="13.500" height="13.500" rx="1"/><rect x="337" y="31" width="13.500" height="13.500" rx="1"/><rect x="352" y="31" width="13.500" height="13.500" rx="1"/></g><rect x="383.500" y="10.500" width="274" height="39" rx="19.500" fill="#33444f" stroke="#4c5a65" stroke-width="1"/><circle cx="406" cy="29" r="6.500" fill="none" stroke="#f0f0f0" stroke-width="1.800"/><path d="M410.500 34L415.500 39.500" stroke="#f0f0f0" stroke-width="2" stroke-linecap="round"/><defs><linearGradient id="sky" x1="0" y1="0" x2="1" y2="0"><stop offset="0" stop-color="#86b2ea"/><stop offset="0.45" stop-color="#b8c8ec"/><stop offset="0.75" stop-color="#f6c4a8"/><stop offset="1" stop-color="#f0a898"/></linearGradient><linearGradient id="lake" x1="0" y1="0" x2="1" y2="0"><stop offset="0" stop-color="#9cc0f0"/><stop offset="0.5" stop-color="#f4d0b8"/><stop offset="1" stop-color="#9cc0f0"/></linearGradient></defs><g><path d="M590 35Q587 27 595 24Q598 16 609 17.500Q615 12.500 625 15.500Q638 11.500 645 19Q654 21 652 35Z" fill="url(#sky)"/><path d="M622 36L634 25.500L639 29L643 26L651 36Z" fill="#7f9fd0"/><path d="M634 25.500L631 30L635 29L637 32L639 29Z" fill="#f4f6fa"/><path d="M643 26L641 30L645 31L647 31Z" fill="#eef2f8"/><path d="M594 36L613.400 16.800L629 36Z" fill="#5c84c0"/><path d="M613.400 16.800L617 27L612 31L616 36H629Z" fill="#dfe8f6"/><path d="M613.400 16.800L611 22L614 21L616 24L617.500 22Z" fill="#f0a468"/><path d="M600 36L607 27L611 32L608 36Z" fill="#88a8dc"/><ellipse cx="606" cy="37.500" rx="17" ry="3.500" fill="#7c9a54"/><ellipse cx="637" cy="37.500" rx="15" ry="3.200" fill="#8aa45c"/><path d="M628 36L636 33L642 36Z" fill="#c8ccb0"/><ellipse cx="621" cy="42.500" rx="23" ry="3" fill="url(#lake)"/><ellipse cx="623" cy="45.500" rx="13" ry="1.800" fill="#a8c8f4"/></g><g transform="translate(672,15)"><rect x="9" y="3" width="17" height="23" rx="2" fill="#3a8ae0" transform="rotate(10 17 14)"/><rect x="4" y="5" width="17" height="23" rx="2" fill="#f4f4f4" stroke="#ccc" stroke-width=".5" transform="rotate(-6 12 16)"/><path d="M12 10C9 14 6 16 6 19a3 3 0 0 0 5 2L10 24H14L13 21a3 3 0 0 0 5-2C18 16 15 14 12 10Z" fill="#111"/><path d="M22 2V10M18 6H26" stroke="#fff" stroke-width="2"/></g><g transform="translate(727,15)"><rect x="8" y="2" width="6" height="11" rx="3" fill="#8ab8ec" stroke="#3a6ab0" stroke-width=".6"/><path d="M11 13V20" stroke="#3a7ae0" stroke-width="2.500"/><rect x="3" y="19" width="15" height="3.500" fill="#c0c8d4" stroke="#808890" stroke-width=".5"/><path d="M2 27.500H19" stroke="#2a7ae8" stroke-width="3"/><text x="9" y="29" style="font-family:'Liberation Serif',serif;font-style:italic;font-weight:bold" font-size="36" fill="#c81cc8" stroke="#4a1060" stroke-width=".7" textLength="21" lengthAdjust="spacingAndGlyphs">A</text></g><g transform="translate(782,15)"><rect x="0" y="4" width="30" height="22" rx="1" fill="#7ac8f0" stroke="#3a98d0" stroke-width="1"/><circle cx="10" cy="14" r="6" fill="#f4f8fc"/><path d="M10 14V8A6 6 0 0 1 16 14Z" fill="#f0a030"/><path d="M19 14H24M24 10V18M24 10H27M24 14H27M24 18H27" stroke="#fff" stroke-width="1.500" fill="none"/><path d="M3 22H27" stroke="#f0a030" stroke-width="1.500"/></g><g transform="translate(837,15)"><rect x="5" y="1" width="22" height="27" rx="3" fill="#41a5ee"/><rect x="5" y="9" width="22" height="10" fill="#2b7cd3"/><rect x="5" y="17" width="22" height="11" rx="3" fill="#185abd"/><rect x="0" y="13" width="14" height="14" rx="2" fill="#1a4ab0"/><text x="7" y="24" font-size="10" font-weight="bold" fill="#fff" text-anchor="middle">W</text></g><g transform="translate(892,15)"><path d="M0 6a2 2 0 0 1 2-2H11L14 7H28a2 2 0 0 1 2 2V26a2 2 0 0 1-2 2H2a2 2 0 0 1-2-2Z" fill="#e8a820"/><rect x="0" y="8" width="30" height="20" rx="2" fill="#f8d040"/><rect x="6" y="20" width="18" height="8" rx="2" fill="#2a7ad8"/><path d="M10 24H20" stroke="#1a5ab0" stroke-width="1.500"/></g><g transform="translate(947,15)"><path d="M5 10L17 1L29 10V25a3 3 0 0 1-3 3H8a3 3 0 0 1-3-3Z" fill="#1a6ad0"/><path d="M8 8L17 2L27 9L14 20Z" fill="#7a6ae0"/><path d="M29 10L10 27H26a3 3 0 0 0 3-3Z" fill="#3ab0f0"/><path d="M5 14L24 28H8a3 3 0 0 1-3-3Z" fill="#2a8ae0"/><rect x="0" y="14" width="13" height="13" rx="3" fill="#0f5ac0"/><text x="6.500" y="24.500" font-size="10" font-weight="bold" fill="#fff" text-anchor="middle">O</text></g><g transform="translate(1002,15)"><rect x="0" y="0" width="30" height="30" rx="4" fill="#f07820"/><path d="M7 22L11 8H14L10 22Z" fill="#fff"/><path d="M13 22L17 8H26L22 22ZM18.500 11.500L16.500 18.500H20.500L22.500 11.500Z" fill="#fff" fill-rule="evenodd"/></g><g transform="translate(1057,15)"><path d="M3 6Q14 0 27 3L24 22Q12 18 1 24Z" fill="#d82050"/><path d="M1 24Q8 20 14 21L14 28Q6 28 0 27Z" fill="#1a3a90"/><path d="M8 11H20M11 8L14 11L11 14M17 8L14 11L17 14" stroke="#fff" stroke-width="1.300" fill="none"/><circle cx="8" cy="11" r="1.300" fill="#fff"/><circle cx="20" cy="11" r="1.300" fill="#fff"/><text x="23" y="29" font-size="8" font-weight="bold" fill="#fff" text-anchor="middle">21</text></g><g transform="translate(1112,15)"><circle cx="15" cy="15" r="15" fill="#1a6af0"/><text x="15" y="18" font-size="7.500" font-weight="bold" fill="#fff" text-anchor="middle">zoom</text></g><g transform="translate(1167,15)"><rect x="0" y="0" width="30" height="30" fill="#2a9ad8"/><path d="M7 7H19V11M4 11H22V18M4 11V19H8M9 15H20V25H9Z" fill="none" stroke="#fff" stroke-width="1.600"/><rect x="21" y="14" width="6" height="11" rx="1" fill="none" stroke="#fff" stroke-width="1.500"/><path d="M12 19H17M12 22H17" stroke="#fff" stroke-width="1.200"/></g><g transform="translate(1222,15)"><rect x="0" y="0" width="30" height="30" fill="#f4f4f4"/><path d="M3 14V6a4 4 0 0 1 4-4H23a4 4 0 0 1 4 4V14Z" fill="#e0e4e8" stroke="#b0b8c0" stroke-width=".8"/><rect x="1" y="13" width="28" height="9" rx="2" fill="#c8d0d8"/><rect x="20" y="10" width="6" height="3" fill="#3ab0e8"/><rect x="6" y="17" width="18" height="12" fill="#fafafa" stroke="#b0b0b0" stroke-width=".8"/><path d="M9 21H21M9 24H21M9 27H21" stroke="#c0c0c0" stroke-width="1"/></g><g transform="translate(1277,15)"><path d="M0 6L5 1H27V29H3Z" fill="#e0204a"/><path d="M0 6L5 1V27L3 29H0Z" fill="#a01030"/><rect x="3" y="21" width="24" height="8" fill="#b01038"/><text x="16" y="17" font-size="16" font-weight="bold" fill="#fff" text-anchor="middle">A</text><text x="15.500" y="27.500" font-size="6" font-weight="bold" fill="#fff" text-anchor="middle">CAD</text></g><g transform="translate(1332,15)"><rect x="1" y="1" width="21" height="21" rx="3" fill="#f4f4f6"/><rect x="5" y="5" width="13" height="13" fill="none" stroke="#e03020" stroke-width="2.200" stroke-dasharray="3 2"/><path d="M10 10H19V22H10Z" fill="#c8ccd4" opacity=".9"/><path d="M19 12L23 21M28 15L19 21" stroke="#b0b4bc" stroke-width="1.500"/><circle cx="28" cy="16" r="2.500" fill="none" stroke="#2a8ae0" stroke-width="1.800"/><circle cx="17" cy="27" r="2.500" fill="none" stroke="#2a8ae0" stroke-width="1.800"/></g><g transform="translate(1387,15)"><rect x="3" y="0" width="23" height="30" rx="2.500" fill="#7a8898"/><rect x="6" y="3" width="17" height="6" fill="#4ac8f0"/><g fill="#c8d0dc"><rect x="6" y="11" width="5" height="5"/><rect x="12" y="11" width="5" height="5"/><rect x="6" y="17" width="5" height="5"/><rect x="12" y="17" width="5" height="5"/><rect x="6" y="23" width="5" height="5"/><rect x="12" y="23" width="5" height="5"/><rect x="18" y="11" width="5" height="5"/></g><rect x="18" y="17" width="5" height="11" fill="#1a4a9a"/></g><g transform="translate(1442,15)"><rect x="6" y="1" width="22" height="27" rx="3" fill="#21a366"/><rect x="17" y="1" width="11" height="9" fill="#33c481"/><rect x="6" y="10" width="11" height="9" fill="#107c41"/><rect x="6" y="19" width="22" height="9" rx="3" fill="#185c37"/><rect x="0" y="13" width="14" height="14" rx="2" fill="#107c41"/><text x="7" y="24" font-size="10" font-weight="bold" fill="#fff" text-anchor="middle">X</text></g><g transform="translate(1497,15)"><ellipse cx="15" cy="15" rx="14" ry="14.500" fill="#e81828"/><ellipse cx="15" cy="15" rx="6.500" ry="10.500" fill="#1c2936"/></g><rect x="1508.500" y="50" width="7" height="3" rx="1.500" fill="#8a9098"/><rect x="1544" y="5" width="49" height="50" rx="5" fill="#2b3945" stroke="#3a4753" stroke-width="1"/><g transform="translate(1552,15)"><rect x="3" y="3" width="7" height="6" fill="#e8203a"/><rect x="3" y="11" width="7" height="17" fill="#fff"/><rect x="13" y="3" width="7" height="25" fill="#fff"/><rect x="22" y="3" width="7" height="6" fill="#fff"/><rect x="22" y="12" width="7" height="6" fill="#fff"/><rect x="22" y="21" width="7" height="7" fill="#fff"/></g><rect x="1558" y="50" width="20" height="3.500" rx="1.700" fill="#d8a0e8"/><path d="M1686 33.500L1692.500 27L1699 33.500" fill="none" stroke="#fff" stroke-width="1.800"/><path d="M1723 26.500Q1732.500 18 1742 26.500M1726 30Q1732.500 24.500 1739 30M1729 33.500Q1732.500 30.500 1736 33.500" fill="none" stroke="#fff" stroke-width="1.600"/><circle cx="1732.500" cy="36" r="1.500" fill="#fff"/><path d="M1754 27H1757L1762 22.500V37.500L1757 33H1754Z" fill="none" stroke="#fff" stroke-width="1.400" stroke-linejoin="round"/><path d="M1765 26.500Q1767.500 30 1765 33.500M1768 24Q1772 30 1768 36" fill="none" stroke="#fff" stroke-width="1.400"/><rect x="1783.500" y="24.500" width="17" height="10" rx="2" fill="none" stroke="#fff" stroke-width="1.400"/><path d="M1801.500 27.500V31.500" stroke="#fff" stroke-width="1.600"/><path d="M1791 22L1787 30H1792L1789 37" fill="none" stroke="#fff" stroke-width="1.300"/><path d="M1797 32C1795 30 1792.500 32 1794 34L1797 37L1800 34C1801.500 32 1799 30 1797 32Z" fill="#fff" stroke="#1c2936" stroke-width=".6"/></svg>
<span class="t" style="left:429.0px;top:23.2px;font-size:16.5px;color:#e4e4e4;transform:scaleX(1.013);transform-origin:0 0;">Ara</span>
<span class="t" style="left:1860.0px;top:12.9px;font-size:14.5px;color:#fff;transform:scaleX(0.992);transform-origin:0 0;">21:12</span>
<span class="t" style="left:1823.0px;top:32.9px;font-size:14.5px;color:#fff;transform:scaleX(1.006);transform-origin:0 0;">10.01.2026</span></div>
<div class="abs" style="left:0px;top:0px;width:56px;height:56px;background:linear-gradient(#2a6cb8 0%,#3f86cf 45%,#2a65b0 50%,#1f4f98 100%);border-right:1px solid #1d4a8c;border-bottom:1px solid #1d4a8c"></div>
<span class="t" style="left:8.0px;top:22.6px;font-size:9px;color:#1c2f55;">ide</span>
<span class="t" style="left:21.0px;top:21.6px;font-size:11px;color:#f0322e;font-weight:bold;transform:scaleX(1.091);transform-origin:0 0;">CAD</span>
<div class="abs" style="left:58px;top:4px;width:1px;height:18px;background:#9a9a9a"></div>
<div class="abs" style="left:272px;top:0px;width:26px;height:27px;background:#fbc968;border:1px solid #d9a13a;border-radius:3px"></div>
<div class="abs" style="left:433px;top:0px;width:25px;height:27px;background:#fbc968;border:1px solid #d9a13a;border-radius:3px"></div>
<div class="abs" style="left:458px;top:0px;width:26px;height:27px;background:#fbc968;border:1px solid #d9a13a;border-radius:3px"></div>
<div class="abs" style="left:540px;top:0px;width:26px;height:27px;background:#fbc968;border:1px solid #d9a13a;border-radius:3px"></div>
<div class="abs" style="left:403px;top:5px;width:1px;height:18px;background:#b0b0b0"></div>
<div class="abs" style="left:538px;top:5px;width:1px;height:18px;background:#b0b0b0"></div>
<svg style="left:0px;top:0px" width="660" height="28" viewBox="0 0 660 28"><path d="M63.5 14L73 4.5L82.5 14H80V21.5H75.5V16H70.5V21.5H66V14Z" fill="#5a83a8" stroke="#2e4f6e" stroke-width="1.2" stroke-linejoin="round"/><path d="M92.5 5.5H100L104.5 10V21.5H92.5Z" fill="#fff" stroke="#1a1a1a" stroke-width="1.4"/><path d="M100 5.5V10H104.5" fill="none" stroke="#1a1a1a" stroke-width="1.2"/><path d="M117 21V9H122L124 11H131V13" fill="#d6e6f2" stroke="#8fb0c8" stroke-width="1.2"/><path d="M117 21L120.5 13H135L131 21Z" fill="#b9d3e6" stroke="#7fa4c0" stroke-width="1.2"/><path d="M128 8Q131 5 134 7" fill="none" stroke="#5a80a0" stroke-width="1"/><path d="M132.5 5.5L135 8.5L131 8.5Z" fill="#5a80a0"/><rect x="144.5" y="5.5" width="15" height="15.5" rx="1" fill="#b4cfe2" stroke="#8fb2ca" stroke-width="1.2"/><rect x="147.5" y="6" width="9" height="6.5" fill="#eef5fa"/><rect x="147.500" y="15" width="9" height="6" fill="#dbe8f2"/><rect x="153" y="16" width="2" height="4" fill="#5f88a8"/><rect x="168.5" y="3.5" width="12" height="12" rx="1" fill="#c2d8e8" stroke="#98b8ce" stroke-width="1.1"/><rect x="172.5" y="8.5" width="13" height="13" rx="1" fill="#b4cfe2" stroke="#8fb2ca" stroke-width="1.2"/><rect x="175" y="9" width="8" height="5" fill="#eef5fa"/><rect x="175" y="16.5" width="8" height="5" fill="#dbe8f2"/><rect x="180" y="17.5" width="2" height="3.5" fill="#5f88a8"/><path d="M198 11.5Q204 5.5 209 9.5Q212.500 13 207.500 17" fill="none" stroke="#1a1aa8" stroke-width="2"/><path d="M195.500 8L196.500 15L203 12.5Z" fill="#1a1aa8"/><path d="M234.500 11.5Q228.500 5.500 223.500 9.5Q220 13 225 17" fill="none" stroke="#8f93e0" stroke-width="2"/><path d="M237 8L236 15L229.500 12.5Z" fill="#8f93e0"/><rect x="245.500" y="5.500" width="19" height="13.500" fill="#f2f2f6" stroke="#8e8e9a" stroke-width="1.3"/><path d="M251 11.500Q256 7 260 10Q262.500 13 258.500 16" fill="none" stroke="#a9aee6" stroke-width="1.600"/><path d="M248.500 9L249.500 14.500L254.500 12Z" fill="#a9aee6"/><path d="M276 5.500H286M276 12.500H283M276 20H281" stroke="#1a1208" stroke-width="3"/><path d="M290 6H295M288 13H295M286 20.500H295" stroke="#1a1208" stroke-width="1.500"/><path d="M289 3L282 23" stroke="#8a9aa8" stroke-width="1.600"/><rect x="302.500" y="4.500" width="17" height="17" fill="#f4f8fb" stroke="#8ab4d0" stroke-width="1.500"/><path d="M306 19L311 7L316 19M307.800 15H314.200" fill="none" stroke="#4a5a78" stroke-width="1.600"/><path d="M330 16.500H347M338.500 5V16.500M338.500 11.500H343V16.500" fill="none" stroke="#1a1a1a" stroke-width="1.400"/><path d="M355 8.500H371M355 16.500H371" stroke="#1a1a1a" stroke-width="1.300"/><path d="M366.500 5.500L371.500 8.500L366.500 11.500M366.500 13.500L371.500 16.500L366.500 19.500" fill="none" stroke="#1a1a1a" stroke-width="1.200"/><path d="M382 5V19.500H396" fill="none" stroke="#1a1a1a" stroke-width="1.800"/><rect x="384.500" y="13.500" width="4.500" height="4" fill="#cfe0ea" stroke="#2a6a6a" stroke-width="1"/><circle cx="382" cy="5" r="1.300" fill="#1a1a1a"/><circle cx="396" cy="19.500" r="1.300" fill="#1a1a1a"/><path d="M409 8H428M409 16H428M413 3V22M420.500 3V22M427.500 3V22" stroke="#333" stroke-width="1"/><path d="M411 8L413 6L415 8L413 10Z" fill="#1f6a4a"/><path d="M418.5 8L420.5 6L422.5 8L420.5 10Z" fill="#1f6a4a"/><path d="M411 16L413 14L415 16L413 18Z" fill="#1f6a4a"/><path d="M418.5 16L420.5 14L422.5 16L420.5 18Z" fill="#1f6a4a"/><path d="M425.5 16L427.5 14L429.5 16L427.5 18Z" fill="#1f6a4a"/><path d="M422 7V5a2.5 2.5 0 0 1 5 0V7" fill="none" stroke="#1e7a4a" stroke-width="1.4"/><rect x="420" y="6.5" width="9" height="6" rx="1" fill="#2fa060" stroke="#17603a" stroke-width=".6"/><path d="M436 5L444 4L449 9L442 14L447 21L437 20L441 13Z" fill="none" stroke="#555" stroke-width="1"/><path d="M434 5L436 3L438 5L436 7Z" fill="#1f5a4a"/><path d="M442 4L444 2L446 4L444 6Z" fill="#1f5a4a"/><path d="M447 9L449 7L451 9L449 11Z" fill="#1f5a4a"/><path d="M440 14L442 12L444 14L442 16Z" fill="#1f5a4a"/><path d="M445 21L447 19L449 21L447 23Z" fill="#1f5a4a"/><path d="M435 20L437 18L439 20L437 22Z" fill="#1f5a4a"/><path d="M439 13L441 11L443 13L441 15Z" fill="#1f5a4a"/><path d="M449 8V6a2.5 2.5 0 0 1 5 0V8" fill="none" stroke="#1e7a4a" stroke-width="1.4"/><rect x="447" y="7.5" width="9" height="6" rx="1" fill="#2fa060" stroke="#17603a" stroke-width=".6"/><path d="M461 4L472 16M474 6L465 22M468.500 12.500L478 10" stroke="#666" stroke-width="1"/><path d="M465.500 12.500L468.500 9.500L471.500 12.500L468.500 15.500Z" fill="#0c2a3a"/><path d="M475 8V6a2.5 2.5 0 0 1 5 0V8" fill="none" stroke="#1e7a4a" stroke-width="1.4"/><rect x="473" y="7.5" width="9" height="6" rx="1" fill="#2fa060" stroke="#17603a" stroke-width=".6"/><path d="M486 9.500H506" stroke="#222" stroke-width="1.200"/><path d="M493 9.500L496 6.500L499 9.500L496 12.500Z" fill="#a01020"/><path d="M487 19L494 12.500M494 12.500H490M494 12.500V16.500" fill="none" stroke="#222" stroke-width="1.200"/><path d="M513 9.500H533" stroke="#222" stroke-width="1.200"/><path d="M523.500 9.500L526.500 6.500L529.500 9.500L526.500 12.500Z" fill="#a01020"/><path d="M526.500 20V13M524 16L526.500 13L529 16" fill="none" stroke="#222" stroke-width="1.200"/><path d="M546 21H554M549.800 5V21M547 16.500L549.800 20.500L552.600 16.500" fill="none" stroke="#e01818" stroke-width="1.500"/><path d="M553 4.500H561M557 5V21M554.200 9.500L557 5.500L559.800 9.500" fill="none" stroke="#e01818" stroke-width="1.500"/><path d="M553.500 12H560.500" stroke="#e01818" stroke-width="1"/><text x="570" y="12" font-size="10.500" font-weight="bold" fill="#222">A</text><path d="M582.500 5.500L577.500 19" stroke="#222" stroke-width="1.300"/><text x="581" y="21.500" font-size="10.500" font-weight="bold" fill="#222">S</text><path d="M603 3.500L612 2.500L606 9.500L611 9L599 22.500L602 13L597.500 14Z" fill="#d8d84a" stroke="#555" stroke-width="1"/><path d="M621 11.500H628L624.500 15Z" fill="#222"/><path d="M651.500 8.500H657.500M651.500 11.500H657.500M654.500 4V17M652 14.500L654.500 17.500L657 14.500" fill="none" stroke="#222" stroke-width="1.200"/></svg>
<span class="t" style="left:660.0px;top:5.5px;font-size:15.5px;color:#1a1a1a;transform:scaleX(0.921);transform-origin:0 0;">ideCAD Statik - zeynep deneme.ide11trial - STATİK ŞABLON PROJE - [3. KAT TAVANI, 11.75 KOTU]</span>
<svg style="left:1760px;top:4px" width="140" height="20" viewBox="0 0 140 20"><path d="M5 9.5H17" stroke="#555" stroke-width="1"/><rect x="63.5" y="6.5" width="8" height="8" rx="1.5" fill="none" stroke="#555"/><path d="M65.5 4.5H72a1.5 1.5 0 0 1 1.5 1.5V12" fill="none" stroke="#555"/><path d="M122 3.5L134 15.5M134 3.5L122 15.5" stroke="#555" stroke-width="1"/></svg>
<div class="abs" style="left:0px;top:56px;width:1920px;height:1px;background:#a9d3e0"></div>
<div class="abs" style="left:59px;top:30px;width:94px;height:27px;background:linear-gradient(#fafcfe,#eef3fa);border:1px solid #9fd0de;border-bottom:none;border-radius:4px 4px 0 0"></div>
<span class="t" style="left:72.0px;top:36.9px;font-size:15.5px;color:#1a1a1a;transform:scaleX(0.884);transform-origin:0 0;">Betonarme</span>
<span class="t" style="left:168.5px;top:36.9px;font-size:15.5px;color:#1a1a1a;transform:scaleX(0.804);transform-origin:0 0;">Ç</span>
<div class="abs" style="left:1198px;top:29px;width:268px;height:12px;background:#dfe4ec;border:1px solid #b3bdce"></div>
<div class="abs" style="left:1527px;top:29px;width:166px;height:12px;background:#dfe4ec;border:1px solid #b3bdce"></div>
<div class="abs" style="left:1532px;top:33px;width:8px;height:6px;border:1.5px solid #111;background:#eee"></div>
<div class="abs" style="left:1549px;top:33px;width:7px;height:6px;border:1.5px solid #333;border-radius:3px 3px 0 0"></div>
<div class="abs" style="left:1473px;top:32px;width:22px;height:8px;border:1.5px solid #333;border-bottom:none;transform:skewX(20deg)"></div>
<div class="abs" style="left:1507px;top:32px;width:18px;height:8px;border:1.5px solid #333;border-bottom:none;transform:skewX(20deg)"></div>
<span class="t" style="left:1741.0px;top:34.9px;font-size:15.5px;color:#1a1a1a;transform:scaleX(0.917);transform-origin:0 0;">im</span>
<svg style="left:1741px;top:28px" width="179" height="28" viewBox="1741 28 179 28"><path d="M1764 40H1772L1768 44.500Z" fill="#111"/><path d="M1783 35H1789V41H1796V35M1786 41V50M1794 41V50M1783 47H1797" fill="none" stroke="#222" stroke-width="1.800"/><rect x="1791" y="32" width="6" height="6" fill="#444"/><rect x="1782" y="45" width="3" height="3" fill="#d02020"/><rect x="1795" y="46" width="3" height="3" fill="#2040d0"/><path d="M1806 35V49" stroke="#555" stroke-width="1"/><rect x="1813" y="32" width="16" height="19" fill="#2a3aa0" stroke="#1a2060" stroke-width="1"/><path d="M1813 51L1829 51L1831 49V34L1829 32" fill="#6a6a8a" opacity=".6"/><text x="1817.500" y="47" font-size="14" fill="#dfe4ff" font-weight="bold">?</text><path d="M1837.500 40H1845.500L1841.500 44.500Z" fill="#111"/><rect x="1850" y="33" width="18" height="20" fill="#fdfdfe" stroke="#e6eaf2" stroke-width="1"/><rect x="1875" y="33" width="18" height="20" fill="#fdfdfe" stroke="#e6eaf2" stroke-width="1"/><rect x="1900" y="33" width="18" height="20" fill="#fdfdfe" stroke="#e6eaf2" stroke-width="1"/><path d="M1856 47.500H1861" stroke="#333" stroke-width="1.600"/><rect x="1880.500" y="42.500" width="5.500" height="4" fill="none" stroke="#333" stroke-width="1.200"/><path d="M1882.500 42V40H1888.500V44.500H1886.500" fill="none" stroke="#333" stroke-width="1.200"/><path d="M1905.500 40L1912 46.500M1912 40L1905.500 46.500" stroke="#333" stroke-width="1.800"/></svg>
<div class="abs" style="left:0px;top:168px;width:1920px;height:1px;background:#7fb4c8"></div>
<span class="t" style="left:15.0px;top:110.4px;font-size:14.5px;color:#7088a8;transform:scaleX(0.912);transform-origin:0 0;">Analiz</span>
<span class="t" style="left:10.0px;top:129.4px;font-size:14.5px;color:#7088a8;transform:scaleX(0.946);transform-origin:0 0;">Ayarları</span>
<span class="t" style="left:73.0px;top:110.4px;font-size:14.5px;color:#7088a8;transform:scaleX(0.965);transform-origin:0 0;">Kat</span>
<span class="t" style="left:61.0px;top:129.4px;font-size:14.5px;color:#7088a8;transform:scaleX(0.883);transform-origin:0 0;">listesi</span>
<span class="t" style="left:137.0px;top:119.4px;font-size:14.5px;color:#7088a8;transform:scaleX(0.845);transform-origin:0 0;">Yarı Riji</span>
<span class="t" style="left:59.0px;top:148.4px;font-size:14.5px;color:#7088a8;transform:scaleX(0.922);transform-origin:0 0;">Proje Ayarları</span>
<div class="abs" style="left:113px;top:116px;width:20px;height:20px;border:1px solid #8a8a8a;border-radius:4px;background:#f3f3f3"></div>
<svg style="left:0px;top:56px" width="180" height="112" viewBox="0 56 180 112"><defs><linearGradient id="gg" x1="0" y1="66" x2="0" y2="103" gradientUnits="userSpaceOnUse"><stop offset="0" stop-color="#a4b2bd"/><stop offset="0.45" stop-color="#6f7f8f"/><stop offset="1" stop-color="#23263c"/></linearGradient></defs><path d="M30.13 71.60L30.56 67.53L36.04 67.53L36.47 71.60L39.48 72.85L42.65 70.27L46.53 74.15L43.95 77.32L45.20 80.33L49.27 80.76L49.27 86.24L45.20 86.67L43.95 89.68L46.53 92.85L42.65 96.73L39.48 94.15L36.47 95.40L36.04 99.47L30.56 99.47L30.13 95.40L27.12 94.15L23.95 96.73L20.07 92.85L22.65 89.68L21.40 86.67L17.33 86.24L17.33 80.76L21.40 80.33L22.65 77.32L20.07 74.15L23.95 70.27L27.12 72.85Z" fill="url(#gg)" stroke="url(#gg)" stroke-width="2.200" stroke-linejoin="round"/><circle cx="33.3" cy="83.5" r="7.6" fill="#2c3046"/><ellipse cx="33.3" cy="84.0" rx="5.2" ry="4.4" fill="#f8fafc"/><rect x="64.500" y="67.500" width="39" height="31" fill="#fdfdfd" stroke="#9c9c9c" stroke-width="1.500"/><rect x="65.500" y="68.500" width="37" height="5" fill="#e6e6e6"/><path d="M69 92V79L80 76V90M69 84L80 81M72 93V80M76 92V78M69 79L72 76.500L83 74.500V88" fill="none" stroke="#8a96a6" stroke-width="1"/><path d="M71 82L81 80V83L71 85Z" fill="#9ab6d6"/><path d="M86 70V97" stroke="#c4c4c4" stroke-width="1"/><path d="M89 78H101M92 74V83M97 75V82M90 86H100V96H90ZM90 91H100" fill="none" stroke="#a9b2be" stroke-width="1"/><circle cx="100" cy="71.500" r="1.300" fill="#e05050"/><path d="M115 68H129L131 66M115 72H129L131 70M115 76H129L131 74M115 80H129L131 78" fill="none" stroke="#2a2a2a" stroke-width="1.500"/><path d="M118 66V80M123 66V80M128 66V80" stroke="#c03030" stroke-width="1"/><path d="M116 94L120 90H131L127 94ZM116 106L120 102H131L127 106Z" fill="none" stroke="#c03030" stroke-width="1.300"/><path d="M123 103V95M120.500 98L123 94.500L125.500 98" fill="none" stroke="#2a4a6a" stroke-width="1.200"/><path d="M96 130H107L101.500 136.500Z" fill="#111"/></svg>
<div class="abs" style="left:1700px;top:60px;width:116px;height:106px;border:1px solid #c5d3e6;border-radius:4px;background:linear-gradient(#eef3fa,#dbe5f3 50%,#d0ddef)"></div>
<div class="abs" style="left:1745px;top:66px;width:31px;height:33px;border:1px solid #c0c8d8;border-radius:3px;background:linear-gradient(#fbfcfe,#e4eaf4)"></div>
<div class="abs" style="left:1754px;top:73px;width:10px;height:10px;border-radius:50%;background:radial-gradient(circle at 40% 35%,#d8f0a0,#8cc84a 60%,#6aa030);border:1px solid #9ab070"></div>
<span class="t" style="left:1741.0px;top:110.4px;font-size:14.5px;color:#7088a8;transform:scaleX(0.854);transform-origin:0 0;">z ve Tasarım</span>
<span class="t" style="left:1741.0px;top:129.4px;font-size:14.5px;color:#7088a8;transform:scaleX(0.949);transform-origin:0 0;">intüleme</span>
<span class="t" style="left:1835.0px;top:110.4px;font-size:14.5px;color:#7088a8;transform:scaleX(0.912);transform-origin:0 0;">Analiz</span>
<span class="t" style="left:1824.0px;top:129.4px;font-size:14.5px;color:#7088a8;transform:scaleX(0.853);transform-origin:0 0;">Tasarım</span>
<span class="t" style="left:1835.0px;top:148.4px;font-size:14.5px;color:#7088a8;transform:scaleX(0.912);transform-origin:0 0;">Analiz</span>
<div class="abs" style="left:1890px;top:65px;width:1px;height:97px;background:#b9c8dc"></div>
<svg style="left:1741px;top:56px" width="179" height="112" viewBox="1741 56 179 112"><path d="M1847.2 65.6L1871.6 64.7L1856.9 79.5L1863.8 80.1L1836.4 102.4L1846.3 85.3L1838.6 86.6Z" fill="#c4c452" stroke="#4a4f38" stroke-width="1.300" stroke-linejoin="round"/><path d="M1849 67.500L1868 66.500L1853 81.500L1859 82L1841 97L1849 83.500L1842 84.500Z" fill="#dcdc7a" opacity=".55"/><path d="M1795 130H1806L1800.500 136.500Z" fill="#111"/><path d="M1872 130H1883L1877.500 136.500Z" fill="#111"/></svg>
<div class="abs" style="left:0px;top:202px;width:1920px;height:1px;background:#c9c9c9"></div>
<svg style="left:0px;top:169px" width="180" height="34" viewBox="0 169 180 34"><rect x="4.500" y="175" width="1.500" height="1.500" fill="#b8b8b8"/><rect x="4.500" y="179" width="1.500" height="1.500" fill="#b8b8b8"/><rect x="4.500" y="183" width="1.500" height="1.500" fill="#b8b8b8"/><rect x="4.500" y="187" width="1.500" height="1.500" fill="#b8b8b8"/><rect x="4.500" y="191" width="1.500" height="1.500" fill="#b8b8b8"/><rect x="4.500" y="195" width="1.500" height="1.500" fill="#b8b8b8"/><rect x="4.500" y="199" width="1.500" height="1.500" fill="#b8b8b8"/><circle cx="23" cy="184" r="8" fill="none" stroke="#3a4a60" stroke-width="1.800"/><rect x="18.500" y="182" width="9" height="6" fill="none" stroke="#3a4a60" stroke-width="1.300"/><path d="M20.500 182V180H29.500V186H27.500" fill="none" stroke="#3a4a60" stroke-width="1.100"/><path d="M29 190L33.500 195" stroke="#3a4a60" stroke-width="2.600" stroke-linecap="round"/><rect x="45.500" y="177.500" width="19" height="18" fill="#eef2f8" stroke="#3a4a60" stroke-width="1.300" stroke-dasharray="3 2"/><path d="M45 181V177H49M61 177H65V181M65 192V196H61M49 196H45V192" fill="none" stroke="#1e2e44" stroke-width="2"/><circle cx="53" cy="185" r="3.800" fill="#f8fafc" stroke="#3a4a60" stroke-width="1.200"/><path d="M56 188L60 192" stroke="#3a4a60" stroke-width="1.500"/><path d="M72.500 175V199M170.500 175V199" stroke="#8a8a8a" stroke-width="1"/><rect x="83" y="177" width="5" height="19" fill="#4a6a90" stroke="#2a4a70" stroke-width=".6"/><path d="M88 178L96 194M96 178L88 194" stroke="#a0a8b0" stroke-width=".8"/><path d="M90 192L98 181L102 177L103 180L100 185L92 193Z" fill="#3a5a80" stroke="#1a2a40" stroke-width=".8"/><path d="M98 181L102 177L103 180L100 184Z" fill="#16202e"/><path d="M97 190L101 194" stroke="#70b070" stroke-width="1"/><path d="M117 193L125 182L128 186L119 195Z" fill="#f4f6fa" stroke="#222" stroke-width="1"/><path d="M124 183Q127 177 130.500 179.500Q132 182 128 186.500Z" fill="#3a5a88" stroke="#16202e" stroke-width="1"/><rect x="114" y="192" width="4" height="3" fill="#9a9a9a"/><rect x="153.500" y="179.500" width="9" height="8" fill="#e6e000" stroke="#1a1a1a" stroke-width="1.300"/><path d="M155.500 182H160.500M155.500 185H160.500" stroke="#1a1a1a" stroke-width="1"/><path d="M153 186Q148 187 148 194M146 191.500L148 195L150.500 192" fill="none" stroke="#1a1a1a" stroke-width="1.300"/></svg><svg style="left:1741px;top:169px" width="179" height="34" viewBox="1741 169 179 34"><path d="M1746 192.500H1758M1749 196H1755" stroke="#e0d020" stroke-width="2.200"/><text x="1746.500" y="191" font-size="15" font-weight="bold" fill="#6f6f6f" stroke="#e0d020" stroke-width="2.400" paint-order="stroke" stroke-linejoin="round">k</text><path d="M1786.500 179V192H1776" fill="none" stroke="#e0d020" stroke-width="6" stroke-linejoin="miter"/><path d="M1786.500 180V192H1777" fill="none" stroke="#7a7a7a" stroke-width="3"/><path d="M1803 181H1815L1819 186L1815 191H1803Z" fill="#2a68c8" stroke="#e0d020" stroke-width="1.600"/><path d="M1832 178V195H1849" fill="none" stroke="#222" stroke-width="1.500"/><path d="M1834 193Q1838 182 1847 185" fill="none" stroke="#444" stroke-width="1"/><circle cx="1847" cy="185" r="1.300" fill="#d02020"/><circle cx="1832" cy="178" r="1.200" fill="#222"/><circle cx="1849" cy="195" r="1.200" fill="#222"/><path d="M1862 178V195H1880" fill="none" stroke="#222" stroke-width="1.500"/><path d="M1864 193L1876 180" fill="none" stroke="#444" stroke-width="1"/><circle cx="1877" cy="179" r="1.400" fill="#d02020"/><text x="1871.500" y="194" font-size="8" font-weight="bold" fill="#444">P</text><circle cx="1862" cy="178" r="1.200" fill="#222"/><circle cx="1880" cy="195" r="1.200" fill="#222"/><path d="M1890.500 175V199" stroke="#8a8a8a" stroke-width="1"/><path d="M1903.500 176L1906.500 179L1903.500 182M1908.500 176L1911.500 179L1908.500 182" fill="none" stroke="#111" stroke-width="1.400"/><path d="M1904.500 190H1911.500L1908 193.500Z" fill="#111"/></svg>
<div class="abs" style="left:35px;top:205px;width:1px;height:744px;background:#e0e0e0"></div>
<div class="abs" style="left:0px;top:940px;width:36px;height:1px;background:#bdbdbd"></div>
<div class="abs" style="left:0px;top:941px;width:34px;height:79px;background:#fff"></div>
<svg style="left:0px;top:205px" width="36" height="745" viewBox="0 205 36 745"><rect x="5" y="209.500" width="1.500" height="1.500" fill="#b8b8b8"/><rect x="9" y="209.500" width="1.500" height="1.500" fill="#b8b8b8"/><rect x="13" y="209.500" width="1.500" height="1.500" fill="#b8b8b8"/><rect x="17" y="209.500" width="1.500" height="1.500" fill="#b8b8b8"/><rect x="21" y="209.500" width="1.500" height="1.500" fill="#b8b8b8"/><rect x="25" y="209.500" width="1.500" height="1.500" fill="#b8b8b8"/><rect x="29" y="209.500" width="1.500" height="1.500" fill="#b8b8b8"/><path d="M5 247.5H30" stroke="#7a7a7a" stroke-width="1"/><path d="M5 394.5H30" stroke="#7a7a7a" stroke-width="1"/><path d="M5 430.5H30" stroke="#7a7a7a" stroke-width="1"/><path d="M5 466.5H30" stroke="#7a7a7a" stroke-width="1"/><path d="M5 670.5H30" stroke="#7a7a7a" stroke-width="1"/><path d="M5 818.5H30" stroke="#7a7a7a" stroke-width="1"/><path d="M5 853.5H30" stroke="#7a7a7a" stroke-width="1"/><path d="M5 888.5H30" stroke="#7a7a7a" stroke-width="1"/><rect x="7.500" y="220.500" width="19" height="16" fill="#f2f2f4" stroke="#8a8a8a" stroke-width="1.300"/><path d="M12 225H23M12 229H23M12 233H23" stroke="#3a5a8a" stroke-width="1.300"/><path d="M9.500 225H10.500M9.500 229H10.500M9.500 233H10.500" stroke="#3a5a8a" stroke-width="1.300"/><rect x="23" y="222" width="2" height="2" fill="#e04040"/><rect x="8" y="255" width="8" height="5.500" fill="#a06070" stroke="#333" stroke-width=".8"/><rect x="12" y="260" width="8" height="5" fill="#a06070" stroke="#333" stroke-width=".8"/><rect x="17" y="265" width="9" height="5.500" fill="#4a4a70" stroke="#333" stroke-width=".8"/><path d="M17 257L23 264L20.500 264L22 268" fill="none" stroke="#333" stroke-width="1.200"/><rect x="8" y="283" width="8" height="5.500" fill="#f4f4f4" stroke="#333" stroke-width=".8"/><rect x="12" y="288" width="8" height="5" fill="#f4f4f4" stroke="#333" stroke-width=".8"/><rect x="17" y="293" width="9" height="5.500" fill="#f4f4f4" stroke="#333" stroke-width=".8"/><path d="M17 285L23 292L20.500 292L22 296" fill="none" stroke="#555" stroke-width="1.200"/><rect x="8" y="313" width="8" height="5.500" fill="#a06070" stroke="#333" stroke-width=".8"/><rect x="12" y="318" width="8" height="5" fill="#a06070" stroke="#333" stroke-width=".8"/><rect x="17" y="323" width="9" height="5.500" fill="#4a4a70" stroke="#333" stroke-width=".8"/><path d="M17 315L23 322L20.500 322L22 326" fill="none" stroke="#333" stroke-width="1.200"/><path d="M25 314V328M23.500 316L25 313.500L26.500 316M23.500 326L25 328.500L26.500 326" fill="none" stroke="#222" stroke-width="1"/><rect x="8" y="340" width="8" height="5.500" fill="#a06070" stroke="#333" stroke-width=".8"/><rect x="12" y="345.500" width="8" height="5" fill="#a06070" stroke="#333" stroke-width=".8"/><rect x="17" y="351" width="9" height="6" fill="#f8f8f8" stroke="#555" stroke-width=".8"/><path d="M23 340V348M19 344H27" stroke="#2a6a9a" stroke-width="1" stroke-dasharray="1.500 1"/><path d="M8 372H24M8 376H24M8 380H24M8 384H24M12 370V386M17 370V386M22 370V386" stroke="#c07070" stroke-width="1"/><rect x="13" y="369" width="10" height="7" fill="#4a4a70" stroke="#222" stroke-width=".8"/><path d="M19 372L26 380L23 380L24.500 384" fill="#fff" stroke="#222" stroke-width="1"/><text x="9" y="418" font-size="12" fill="#222">?</text><path d="M21 405.500Q18.500 405.500 18.500 408V411Q18.500 413 16.500 413.500Q18.500 414 18.500 416V419Q18.500 421.500 21 421.500" fill="none" stroke="#222" stroke-width="1.300"/><rect x="22" y="404.500" width="4.500" height="17" fill="#c8b020" stroke="#222" stroke-width=".9"/><path d="M23 407H25M23 410H25M23 413H25M23 416H25M23 419H25" stroke="#222" stroke-width=".7"/><rect x="9.500" y="439.500" width="14" height="18" rx="1.500" fill="#f4f4f4" stroke="#222" stroke-width="1.500"/><path d="M12.500 445H20.500M12.500 449H20.500M12.500 453H17.500" stroke="#222" stroke-width="1.500"/><path d="M9 481L13 476H26L22 481ZM9 494L13 489H26L22 494Z" fill="none" stroke="#c03030" stroke-width="1.300"/><path d="M17 490V481M14.500 484L17 480.500L19.500 484" fill="none" stroke="#2a4a6a" stroke-width="1.200"/><rect x="8.500" y="505.500" width="9" height="11" fill="#f4f4f4" stroke="#222" stroke-width="1.200"/><rect x="14.500" y="509.500" width="10" height="11" fill="#f4f4f4" stroke="#222" stroke-width="1.200"/><path d="M16.500 513H22.500M16.500 515.500H22.500M16.500 518H22.500" stroke="#222" stroke-width="1"/><rect x="9" y="534" width="14" height="14" rx="1" fill="#e8e0b8" stroke="#b0a890" stroke-width="1"/><rect x="13" y="532" width="6" height="3.500" fill="#c0b8a0"/><rect x="14.500" y="539.500" width="11" height="10" fill="#e4e8ee" stroke="#a8b0c0" stroke-width="1"/><rect x="8.500" y="561.500" width="9" height="12" fill="#c8d4e4" stroke="#5a6a8a" stroke-width="1"/><path d="M20 560Q25 560 25 566M23 564.500L25 567L27 564.500" fill="none" stroke="#333" stroke-width="1.100"/><rect x="15.500" y="567.500" width="8" height="8" fill="#f4f4f4" stroke="#777" stroke-width="1" stroke-dasharray="2 1"/><rect x="8.500" y="589.500" width="8" height="9" fill="#c8d4e4" stroke="#3a4a6a" stroke-width="1"/><rect x="12.500" y="593.500" width="8" height="9" fill="#c8d4e4" stroke="#3a4a6a" stroke-width="1"/><rect x="16.500" y="597.500" width="8" height="8" fill="#e4e8ee" stroke="#3a4a6a" stroke-width="1"/><path d="M19 588Q24 587 24.500 592" fill="none" stroke="#333" stroke-width="1"/><rect x="7.500" y="616.500" width="7" height="11" fill="#a8bcd8" stroke="#3a4a6a" stroke-width="1"/><rect x="16.500" y="616.500" width="9" height="11" fill="#a8bcd8" stroke="#3a4a6a" stroke-width="1"/><path d="M8 631Q16 635 26 629M23.500 628L26.500 629L25 632" fill="none" stroke="#222" stroke-width="1.100"/><circle cx="11" cy="645" r="2" fill="#f4f4f4" stroke="#222" stroke-width="1.200"/><circle cx="17" cy="643.5" r="2" fill="#f4f4f4" stroke="#222" stroke-width="1.200"/><circle cx="23" cy="645" r="2" fill="#f4f4f4" stroke="#222" stroke-width="1.200"/><circle cx="9.5" cy="652" r="2" fill="#f4f4f4" stroke="#222" stroke-width="1.200"/><circle cx="24.5" cy="652" r="2" fill="#f4f4f4" stroke="#222" stroke-width="1.200"/><circle cx="13" cy="658" r="2" fill="#f4f4f4" stroke="#222" stroke-width="1.200"/><circle cx="21" cy="658" r="2" fill="#f4f4f4" stroke="#222" stroke-width="1.200"/><path d="M8 696L26 681M10 695V684L22 684" fill="none" stroke="#222" stroke-width="1.300"/><path d="M10 695L22 684V690L14 696Z" fill="#6a7a9a" opacity=".7"/><rect x="8.500" y="708.500" width="18" height="16" fill="#dce4f0" stroke="#2a3a5a" stroke-width="1.300"/><path d="M13 709V724M17 709V724M21 709V724" stroke="#2a3a5a" stroke-width="1.500"/><path d="M19 713L25 719L22.500 719L23.500 722" fill="#fff" stroke="#222" stroke-width=".9"/><path d="M8 752L12 748V742L14 739L16 742V747L19 744V739L21 736L23 739V745L28 741V747L22 753Z" fill="#7a8aa8" stroke="#2a3a5a" stroke-width="1"/><path d="M8 782L28 766" stroke="#222" stroke-width="1.400"/><path d="M8 776H28M8 780H20" stroke="#777" stroke-width="1"/><path d="M11 794H28V799H16V811H11Z" fill="#d8d8d8" stroke="#222" stroke-width="1.200"/><circle cx="12.500" cy="795" r="2.500" fill="#c060c0" stroke="#602060" stroke-width=".8"/><path d="M19 794V797M22 794V797M25 794V797" stroke="#222" stroke-width=".8"/><rect x="8" y="829" width="8" height="14" rx="2" fill="#3a3a4a" stroke="#111" stroke-width=".8"/><rect x="18" y="829" width="8" height="14" rx="2" fill="#3a3a4a" stroke="#111" stroke-width=".8"/><rect x="10" y="832" width="4" height="5" fill="#c8d8e8"/><circle cx="18" cy="840" r="3" fill="#d03030" stroke="#600" stroke-width=".6"/><text x="7" y="868" font-size="7.500" font-weight="bold" fill="#3a5a8a" textLength="20" lengthAdjust="spacingAndGlyphs">AUTO</text><text x="8" y="876" font-size="8.500" font-weight="bold" fill="#3a5a8a" textLength="18" lengthAdjust="spacingAndGlyphs">ABC</text><path d="M7 869.500H27M7 878.500H27" stroke="#3a5a8a" stroke-width="1"/><path d="M9 915V905L11 899H15L16 905V915ZM19 915V905L20 899H24L26 905V915Z" fill="#1a1a1a"/><rect x="15" y="903" width="5" height="4" fill="#1a1a1a"/><path d="M13 925.500L9 928.500L13 931.500Z" fill="#111"/></svg>
<div class="abs" style="left:1918px;top:205px;width:1px;height:745px;background:#b4b0bc"></div>
<div class="abs" style="left:34px;top:948px;width:1886px;height:1.5px;background:#c4c2c8"></div>
<div class="abs" style="left:34px;top:203px;width:1.5px;height:746px;background:#d8d8dc"></div>
<span class="t" style="left:34.0px;top:957.6px;font-size:13px;color:#111;transform:scaleX(1.009);transform-origin:0 0;">*İptal*</span>
<span class="t" style="left:34.0px;top:974.6px;font-size:13px;color:#111;">Komut :</span>
<span class="t" style="left:40.5px;top:1002.4px;font-size:13px;color:#111;transform:scaleX(0.947);transform-origin:0 0;">BOŞ</span>
<span class="t" style="left:296.0px;top:1002.4px;font-size:13px;color:#111;transform:scaleX(1.018);transform-origin:0 0;">Proje &quot;C:\Users\emre_\OneDrive\Desktop\ŞANTİYE ŞEFLİKLERİ\ASEL İNŞAAT BAYRAM BEY\9612 ZEYNEP KORKMAZ\statik\zeynep deneme10_01-21_12.bak&quot; kaydedildi.</span>
<span class="t" style="left:1697.0px;top:1002.4px;font-size:13px;color:#111;transform:scaleX(1.108);transform-origin:0 0;">tf / m</span>
<span class="t" style="left:1777.0px;top:1002.4px;font-size:13px;color:#111;transform:scaleX(1.031);transform-origin:0 0;">1 : 100</span>
<span class="t" style="left:1852.0px;top:1002.4px;font-size:13px;color:#111;transform:scaleX(1.031);transform-origin:0 0;">% 455</span>
<div class="abs" style="left:291px;top:998px;width:1px;height:21px;background:#c8c8c8"></div>
<div class="abs" style="left:1691px;top:998px;width:1px;height:21px;background:#c8c8c8"></div>
<div class="abs" style="left:1766px;top:998px;width:1px;height:21px;background:#c8c8c8"></div>
<div class="abs" style="left:1842px;top:998px;width:1px;height:21px;background:#c8c8c8"></div>
<div class="abs" style="left:1912px;top:998px;width:1px;height:21px;background:#c8c8c8"></div>
<div id="dlg" class="abs">
<div id="dlgtitle" class="abs"></div>
<span class="t" style="left:9.0px;top:11.4px;font-size:15px;color:#1a1a1a;transform:scaleX(0.970);transform-origin:0 0;">Perde Grubu Betonarme  :  PG1 - P11 / 1. KAT</span>
<svg style="left:1534px;top:11px" width="14" height="14" viewBox="0 0 14 14"><path d="M1 1 L13 13 M13 1 L1 13" stroke="#111" stroke-width="1.3" fill="none"/></svg>
<div class="abs" style="left:7px;top:68px;width:1546px;height:825px;background:#f9f9f9;border:1px solid #e2e2e2"></div>
<div class="abs" style="left:104px;top:48px;width:109px;height:21px;background:#f0f0f0;border:1px solid #e2e2e2;border-left:none;border-bottom:1px solid #e2e2e2"></div>
<span class="t" style="left:109.0px;top:52.1px;font-size:13px;color:#000;transform:scaleX(0.948);transform-origin:0 0;">Eleman Hesapları</span>
<div class="abs" style="left:213px;top:48px;width:163px;height:21px;background:#f0f0f0;border:1px solid #e2e2e2;border-left:none;border-bottom:1px solid #e2e2e2"></div>
<span class="t" style="left:220.0px;top:52.1px;font-size:13px;color:#000;transform:scaleX(0.986);transform-origin:0 0;">Kesit Hücresi(Lif) Tasarımı</span>
<div class="abs" style="left:376px;top:48px;width:136px;height:21px;background:#f0f0f0;border:1px solid #e2e2e2;border-left:none;border-bottom:1px solid #e2e2e2"></div>
<span class="t" style="left:382.0px;top:52.1px;font-size:13px;color:#000;transform:scaleX(0.970);transform-origin:0 0;">Kapasite Diyagramları</span>
<div class="abs" style="left:512px;top:48px;width:97px;height:21px;background:#f0f0f0;border:1px solid #e2e2e2;border-left:none;border-bottom:1px solid #e2e2e2"></div>
<span class="t" style="left:518.0px;top:52.1px;font-size:13px;color:#000;transform:scaleX(0.981);transform-origin:0 0;">Moment-Eğrilik</span>
<div class="abs" style="left:609px;top:48px;width:114px;height:21px;background:#f0f0f0;border:1px solid #e2e2e2;border-left:none;border-bottom:1px solid #e2e2e2"></div>
<span class="t" style="left:615.0px;top:52.1px;font-size:13px;color:#000;transform:scaleX(0.983);transform-origin:0 0;">Kapasite Tasarımı</span>
<div class="abs" style="left:723px;top:48px;width:77px;height:21px;background:#f0f0f0;border:1px solid #e2e2e2;border-left:none;border-bottom:1px solid #e2e2e2"></div>
<span class="t" style="left:729.0px;top:52.1px;font-size:13px;color:#000;transform:scaleX(0.972);transform-origin:0 0;">İç Kuvvetler</span>
<div class="abs" style="left:7px;top:46px;width:98px;height:24px;background:#f9f9f9;border:1px solid #e2e2e2;border-bottom:none"></div>
<span class="t" style="left:15.0px;top:50.1px;font-size:13px;color:#000;transform:scaleX(0.962);transform-origin:0 0;">Perde Grupları</span>
<div class="abs" style="left:23px;top:84px;width:672px;height:442px;background:#fff;border:1px solid #7a7a7a"></div>
<div class="abs" style="left:211px;top:86px;width:1px;height:24px;background:#e5e5e5"></div>
<div class="abs" style="left:464px;top:86px;width:1px;height:24px;background:#e5e5e5"></div>
<div class="abs" style="left:577px;top:86px;width:1px;height:24px;background:#e5e5e5"></div>
<span class="t" style="left:31.0px;top:92.1px;font-size:13px;color:#000;transform:scaleX(0.934);transform-origin:0 0;">Grup</span>
<span class="t" style="left:218.0px;top:92.1px;font-size:13px;color:#000;transform:scaleX(0.922);transform-origin:0 0;">Kat</span>
<span class="t" style="left:485.0px;top:92.1px;font-size:13px;color:#000;transform:scaleX(0.962);transform-origin:0 0;">Kap. Oranı-X</span>
<span class="t" style="left:599.0px;top:92.1px;font-size:13px;color:#000;transform:scaleX(0.956);transform-origin:0 0;">Kap. Oranı-Y</span>
<div class="abs" style="left:210px;top:111px;width:484px;height:22px;background:#0078d7"></div>
<div class="abs" style="left:25px;top:111px;width:6px;height:22px;background:#0068d0"></div>
<div class="abs" style="left:464px;top:111px;width:1px;height:22px;background:#6fb0ea"></div>
<div class="abs" style="left:577px;top:111px;width:1px;height:22px;background:#6fb0ea"></div>
<div class="abs" style="left:25px;top:110px;width:669px;height:24px;border:1px dotted #222"></div>
<span class="t" style="left:31.0px;top:115.9px;font-size:13.5px;color:#000;transform:scaleX(0.925);transform-origin:0 0;">PG1</span>
<span class="t" style="left:218.0px;top:115.9px;font-size:13.5px;color:#fff;transform:scaleX(0.944);transform-origin:0 0;">1. KAT</span>
<span class="t" style="left:502.0px;top:116.1px;font-size:13px;color:#fff;transform:scaleX(0.956);transform-origin:0 0;">0.4946</span>
<span class="t" style="left:616.5px;top:116.1px;font-size:13px;color:#fff;transform:scaleX(0.943);transform-origin:0 0;">0.3286</span>
<div class="abs" style="left:706px;top:84px;width:834px;height:442px;background:#fff;border:1px solid #6a6a6a"></div>
<svg style="left:707px;top:85px" width="832" height="440" viewBox="886 122 832 440">
<defs><pattern id="hat" width="3.5" height="3.5" patternUnits="userSpaceOnUse"><rect width="3.5" height="3.5" fill="#e6eaf2"/><path d="M-1 1L1 -1M0 3.5L3.5 0M2.5 4.5L4.5 2.5" stroke="#8fa0c4" stroke-width="0.7"/></pattern></defs>
<rect x="1146.5" y="198.5" width="335.0" height="33.0" fill="none" stroke="#e3a678"/>
<rect x="1146.5" y="198.5" width="33" height="312" fill="none" stroke="#e3a678"/>
<rect x="1399.5" y="198.5" width="33" height="312" fill="none" stroke="#e3a678"/>
<rect x="1146.5" y="198.5" width="72" height="33" fill="url(#hat)" stroke="#7d7d7d" stroke-width="1"/>
<rect x="1146.5" y="231.5" width="33" height="39" fill="url(#hat)" stroke="#7d7d7d" stroke-width="1"/>
<rect x="1399.5" y="198.5" width="82" height="33" fill="url(#hat)" stroke="#7d7d7d" stroke-width="1"/>
<rect x="1399.5" y="231.5" width="33" height="39" fill="url(#hat)" stroke="#7d7d7d" stroke-width="1"/>
<rect x="1146.5" y="445.5" width="33" height="65" fill="url(#hat)" stroke="#7d7d7d" stroke-width="1"/>
<rect x="1399.5" y="445.5" width="33" height="65" fill="url(#hat)" stroke="#7d7d7d" stroke-width="1"/>
<path d="M1179.50 198.50L1179.50 231.50" stroke="#7d7d7d" stroke-width="1" fill="none"/>
<path d="M1414.50 198.50L1414.50 231.50" stroke="#7d7d7d" stroke-width="1" fill="none"/>
<path d="M1432.50 198.50L1432.50 231.50" stroke="#7d7d7d" stroke-width="1" fill="none"/>
<rect x="1150.5" y="201.5" width="327" height="27" fill="none" stroke="#2a2f9a"/>
<path d="M1150.5 228.5V506.5H1175.5V228.5" fill="none" stroke="#2a2f9a"/>
<path d="M1403.5 228.5V506.5H1429.5V228.5" fill="none" stroke="#2a2f9a"/>
<path d="M1175.50 201.50L1175.50 228.50" stroke="#2a2f9a" stroke-width="1" fill="none"/>
<path d="M1403.50 201.50L1403.50 228.50" stroke="#2a2f9a" stroke-width="1" fill="none"/>
<path d="M1429.50 201.50L1429.50 228.50" stroke="#2a2f9a" stroke-width="1" fill="none"/>
<path d="M1150.50 201.50L1154.50 205.50" stroke="#2a2f9a" stroke-width="1" fill="none"/>
<path d="M1175.50 201.50L1171.50 205.50" stroke="#2a2f9a" stroke-width="1" fill="none"/>
<path d="M1150.50 506.50L1154.50 502.50" stroke="#2a2f9a" stroke-width="1" fill="none"/>
<path d="M1175.50 506.50L1171.50 502.50" stroke="#2a2f9a" stroke-width="1" fill="none"/>
<path d="M1403.50 201.50L1407.50 205.50" stroke="#2a2f9a" stroke-width="1" fill="none"/>
<path d="M1477.50 201.50L1473.50 205.50" stroke="#2a2f9a" stroke-width="1" fill="none"/>
<path d="M1477.50 228.50L1473.50 224.50" stroke="#2a2f9a" stroke-width="1" fill="none"/>
<path d="M1403.50 506.50L1407.50 502.50" stroke="#2a2f9a" stroke-width="1" fill="none"/>
<path d="M1429.50 506.50L1425.50 502.50" stroke="#2a2f9a" stroke-width="1" fill="none"/>
<path d="M1188 201.5H1195V228.5H1191" fill="none" stroke="#35c24a"/>
<path d="M1191.00 205.00L1187.00 202.00" stroke="#35c24a" stroke-width="1" fill="none"/>
<path d="M1207.5 201.5H1214.5V228.5H1210.5" fill="none" stroke="#3fc6c0"/>
<path d="M1210.50 205.00L1206.50 202.00" stroke="#3fc6c0" stroke-width="1" fill="none"/>
<path d="M1261.7 201.5H1268.7V228.5H1264.7" fill="none" stroke="#35c24a"/>
<path d="M1264.70 205.00L1260.70 202.00" stroke="#35c24a" stroke-width="1" fill="none"/>
<path d="M1433 201.5H1440V228.5H1436" fill="none" stroke="#35c24a"/>
<path d="M1436.00 205.00L1432.00 202.00" stroke="#35c24a" stroke-width="1" fill="none"/>
<path d="M1448 201.5H1455V228.5H1451" fill="none" stroke="#35c24a"/>
<path d="M1451.00 205.00L1447.00 202.00" stroke="#35c24a" stroke-width="1" fill="none"/>
<path d="M1363 201.5H1370" stroke="#35c24a"/><path d="M1364 228.5L1371 223" stroke="#35c24a"/>
<path d="M1417.5 203V222L1429 226" fill="none" stroke="#3fc6c0"/>
<path d="M1150.5 250.5V243.5H1176.5V250.5" stroke="#35c24a" fill="none"/>
<path d="M1151.50 246.50L1155.50 251.50" stroke="#35c24a" stroke-width="1" fill="none"/>
<path d="M1150.5 266.5H1175.5" stroke="#3fc6c0" fill="none"/>
<path d="M1153.50 265.50L1157.50 261.50" stroke="#3fc6c0" stroke-width="1" fill="none"/>
<path d="M1150.5 362.5V355.5H1176.5V362.5" stroke="#35c24a" fill="none"/>
<path d="M1151.50 358.50L1155.50 363.50" stroke="#35c24a" stroke-width="1" fill="none"/>
<path d="M1150.5 447.5H1175.5" stroke="#3fc6c0" fill="none"/>
<path d="M1153.50 448.50L1157.50 452.50" stroke="#3fc6c0" stroke-width="1" fill="none"/>
<path d="M1150.5 475.5V468.5H1176.5V475.5" stroke="#35c24a" fill="none"/>
<path d="M1151.50 471.50L1155.50 476.50" stroke="#35c24a" stroke-width="1" fill="none"/>
<path d="M1150.5 491.5V484.5H1176.5V491.5" stroke="#35c24a" fill="none"/>
<path d="M1151.50 487.50L1155.50 492.50" stroke="#35c24a" stroke-width="1" fill="none"/>
<path d="M1403.5 250.5V243.5H1430.5V250.5" stroke="#35c24a" fill="none"/>
<path d="M1404.50 246.50L1408.50 251.50" stroke="#35c24a" stroke-width="1" fill="none"/>
<path d="M1403.5 266.5H1429.5" stroke="#3fc6c0" fill="none"/>
<path d="M1406.50 265.50L1410.50 261.50" stroke="#3fc6c0" stroke-width="1" fill="none"/>
<path d="M1403.5 362.5V355.5H1430.5V362.5" stroke="#35c24a" fill="none"/>
<path d="M1404.50 358.50L1408.50 363.50" stroke="#35c24a" stroke-width="1" fill="none"/>
<path d="M1403.5 447.5H1429.5" stroke="#3fc6c0" fill="none"/>
<path d="M1406.50 448.50L1410.50 452.50" stroke="#3fc6c0" stroke-width="1" fill="none"/>
<path d="M1403.5 475.5V468.5H1430.5V475.5" stroke="#35c24a" fill="none"/>
<path d="M1404.50 471.50L1408.50 476.50" stroke="#35c24a" stroke-width="1" fill="none"/>
<path d="M1403.5 491.5V484.5H1430.5V491.5" stroke="#35c24a" fill="none"/>
<path d="M1404.50 487.50L1408.50 492.50" stroke="#35c24a" stroke-width="1" fill="none"/>
<rect x="1234.5" y="202.5" width="1.2" height="1.5" fill="#a020c0"/><rect x="1234.5" y="225" width="1.2" height="1.5" fill="#a020c0"/>
<rect x="1266" y="202.5" width="1.2" height="1.5" fill="#a020c0"/><rect x="1266" y="225" width="1.2" height="1.5" fill="#a020c0"/>
<rect x="1298.7" y="202.5" width="1.2" height="1.5" fill="#a020c0"/><rect x="1298.7" y="225" width="1.2" height="1.5" fill="#a020c0"/>
<rect x="1331.2" y="202.5" width="1.2" height="1.5" fill="#a020c0"/><rect x="1331.2" y="225" width="1.2" height="1.5" fill="#a020c0"/>
<rect x="1363.5" y="202.5" width="1.2" height="1.5" fill="#a020c0"/><rect x="1363.5" y="225" width="1.2" height="1.5" fill="#a020c0"/>
<rect x="1173" y="292" width="1.5" height="1.5" fill="#a020c0"/>
<rect x="1173" y="324.5" width="1.5" height="1.5" fill="#a020c0"/>
<rect x="1173" y="357" width="1.5" height="1.5" fill="#a020c0"/>
<rect x="1173" y="389.5" width="1.5" height="1.5" fill="#a020c0"/>
<rect x="1173" y="421.5" width="1.5" height="1.5" fill="#a020c0"/>
<rect x="1404.5" y="292" width="1.5" height="1.5" fill="#a020c0"/>
<rect x="1404.5" y="324.5" width="1.5" height="1.5" fill="#a020c0"/>
<rect x="1404.5" y="357" width="1.5" height="1.5" fill="#a020c0"/>
<rect x="1404.5" y="389.5" width="1.5" height="1.5" fill="#a020c0"/>
<rect x="1404.5" y="421.5" width="1.5" height="1.5" fill="#a020c0"/>
<rect x="1426.5" y="292" width="1.5" height="1.5" fill="#a020c0"/>
<rect x="1426.5" y="324.5" width="1.5" height="1.5" fill="#a020c0"/>
<rect x="1426.5" y="357" width="1.5" height="1.5" fill="#a020c0"/>
<rect x="1426.5" y="389.5" width="1.5" height="1.5" fill="#a020c0"/>
<rect x="1426.5" y="421.5" width="1.5" height="1.5" fill="#a020c0"/>
<path d="M1142.50 145.50L1485.50 145.50" stroke="#7d7d7d" stroke-width="1" fill="none"/><path d="M1146.50 140.50L1146.50 151.50" stroke="#7d7d7d" stroke-width="1" fill="none"/><path d="M1481.50 140.50L1481.50 151.50" stroke="#7d7d7d" stroke-width="1" fill="none"/>
<path d="M1142.50 160.50L1485.50 160.50" stroke="#7d7d7d" stroke-width="1" fill="none"/><path d="M1146.50 155.50L1146.50 166.50" stroke="#7d7d7d" stroke-width="1" fill="none"/><path d="M1218.50 155.50L1218.50 166.50" stroke="#7d7d7d" stroke-width="1" fill="none"/><path d="M1414.50 155.50L1414.50 166.50" stroke="#7d7d7d" stroke-width="1" fill="none"/><path d="M1481.50 155.50L1481.50 166.50" stroke="#7d7d7d" stroke-width="1" fill="none"/>
<path d="M1142.50 546.50L1183.50 546.50" stroke="#7d7d7d" stroke-width="1" fill="none"/><path d="M1146.50 541.50L1146.50 552.50" stroke="#7d7d7d" stroke-width="1" fill="none"/><path d="M1179.50 541.50L1179.50 552.50" stroke="#7d7d7d" stroke-width="1" fill="none"/>
<path d="M1395.50 546.50L1436.50 546.50" stroke="#7d7d7d" stroke-width="1" fill="none"/><path d="M1399.50 541.50L1399.50 552.50" stroke="#7d7d7d" stroke-width="1" fill="none"/><path d="M1432.50 541.50L1432.50 552.50" stroke="#7d7d7d" stroke-width="1" fill="none"/>
<path d="M1093.50 194.50L1093.50 514.50" stroke="#7d7d7d" stroke-width="1" fill="none"/><path d="M1091.50 198.50L1099.50 198.50" stroke="#7d7d7d" stroke-width="1" fill="none"/><path d="M1091.50 510.50L1099.50 510.50" stroke="#7d7d7d" stroke-width="1" fill="none"/>
<path d="M1110.50 194.50L1110.50 514.50" stroke="#7d7d7d" stroke-width="1" fill="none"/><path d="M1108.50 198.50L1116.50 198.50" stroke="#7d7d7d" stroke-width="1" fill="none"/><path d="M1108.50 270.50L1116.50 270.50" stroke="#7d7d7d" stroke-width="1" fill="none"/><path d="M1108.50 445.50L1116.50 445.50" stroke="#7d7d7d" stroke-width="1" fill="none"/><path d="M1108.50 510.50L1116.50 510.50" stroke="#7d7d7d" stroke-width="1" fill="none"/>
<path d="M1346.50 194.50L1346.50 514.50" stroke="#7d7d7d" stroke-width="1" fill="none"/><path d="M1344.50 198.50L1352.50 198.50" stroke="#7d7d7d" stroke-width="1" fill="none"/><path d="M1344.50 510.50L1352.50 510.50" stroke="#7d7d7d" stroke-width="1" fill="none"/>
<path d="M1362.50 194.50L1362.50 514.50" stroke="#7d7d7d" stroke-width="1" fill="none"/><path d="M1360.50 198.50L1368.50 198.50" stroke="#7d7d7d" stroke-width="1" fill="none"/><path d="M1360.50 270.50L1368.50 270.50" stroke="#7d7d7d" stroke-width="1" fill="none"/><path d="M1360.50 445.50L1368.50 445.50" stroke="#7d7d7d" stroke-width="1" fill="none"/><path d="M1360.50 510.50L1368.50 510.50" stroke="#7d7d7d" stroke-width="1" fill="none"/>
<path d="M1518.50 194.00L1518.50 236.00" stroke="#7d7d7d" stroke-width="1" fill="none"/>
<path d="M1514.00 198.50L1521.00 198.50" stroke="#7d7d7d" stroke-width="1" fill="none"/>
<path d="M1514.00 231.50L1521.00 231.50" stroke="#7d7d7d" stroke-width="1" fill="none"/>
<text x="1312.50" y="144.51" font-size="14" fill="#555" text-anchor="middle" textLength="35.0" lengthAdjust="spacingAndGlyphs">257.5</text>
<text x="1181.70" y="160.01" font-size="14" fill="#555" text-anchor="middle" textLength="15.5" lengthAdjust="spacingAndGlyphs">55</text>
<text x="1315.50" y="160.01" font-size="14" fill="#555" text-anchor="middle" textLength="22.0" lengthAdjust="spacingAndGlyphs">151</text>
<text x="1446.70" y="160.01" font-size="14" fill="#555" text-anchor="middle" textLength="15.5" lengthAdjust="spacingAndGlyphs">52</text>
<text x="1181.50" y="182.31" font-size="14" fill="#000" text-anchor="middle" textLength="34.0" lengthAdjust="spacingAndGlyphs">8Φ16</text>
<text x="1181.50" y="196.31" font-size="14" fill="#000" text-anchor="middle" textLength="72.0" lengthAdjust="spacingAndGlyphs">Etr. Φ10/20</text>
<text x="1446.50" y="182.31" font-size="14" fill="#000" text-anchor="middle" textLength="34.0" lengthAdjust="spacingAndGlyphs">8Φ16</text>
<text x="1446.50" y="196.31" font-size="14" fill="#000" text-anchor="middle" textLength="72.0" lengthAdjust="spacingAndGlyphs">Etr. Φ10/20</text>
<text x="1315.00" y="182.31" font-size="14" fill="#000" text-anchor="middle" textLength="70.0" lengthAdjust="spacingAndGlyphs">2x6Φ14/25</text>
<text x="1315.30" y="196.31" font-size="14" fill="#000" text-anchor="middle" textLength="73.0" lengthAdjust="spacingAndGlyphs">Etr. Φ10/25</text>
<text x="1316.20" y="246.23" font-size="16" fill="#ff1c1c" text-anchor="middle" textLength="100.0" lengthAdjust="spacingAndGlyphs">P111 (258/25)</text>
<text x="1087.50" y="358.71" font-size="14" fill="#555" text-anchor="middle" textLength="22.0" lengthAdjust="spacingAndGlyphs" transform="rotate(-90 1087.50 353.70)">240</text>
<text x="1103.00" y="358.71" font-size="14" fill="#555" text-anchor="middle" textLength="22.0" lengthAdjust="spacingAndGlyphs" transform="rotate(-90 1103.00 353.70)">135</text>
<text x="1103.00" y="238.71" font-size="14" fill="#555" text-anchor="middle" textLength="15.5" lengthAdjust="spacingAndGlyphs" transform="rotate(-90 1103.00 233.70)">55</text>
<text x="1103.00" y="482.01" font-size="14" fill="#555" text-anchor="middle" textLength="15.5" lengthAdjust="spacingAndGlyphs" transform="rotate(-90 1103.00 477.00)">50</text>
<text x="1125.50" y="238.71" font-size="14" fill="#000" text-anchor="middle" textLength="34.0" lengthAdjust="spacingAndGlyphs" transform="rotate(-90 1125.50 233.70)">8Φ16</text>
<text x="1138.70" y="238.71" font-size="14" fill="#000" text-anchor="middle" textLength="72.5" lengthAdjust="spacingAndGlyphs" transform="rotate(-90 1138.70 233.70)">Etr. Φ10/20</text>
<text x="1125.50" y="362.51" font-size="14" fill="#000" text-anchor="middle" textLength="70.0" lengthAdjust="spacingAndGlyphs" transform="rotate(-90 1125.50 357.50)">2x5Φ14/25</text>
<text x="1138.70" y="362.51" font-size="14" fill="#000" text-anchor="middle" textLength="73.5" lengthAdjust="spacingAndGlyphs" transform="rotate(-90 1138.70 357.50)">Etr. Φ10/15</text>
<text x="1125.50" y="482.01" font-size="14" fill="#000" text-anchor="middle" textLength="34.0" lengthAdjust="spacingAndGlyphs" transform="rotate(-90 1125.50 477.00)">8Φ16</text>
<text x="1138.70" y="482.01" font-size="14" fill="#000" text-anchor="middle" textLength="72.5" lengthAdjust="spacingAndGlyphs" transform="rotate(-90 1138.70 477.00)">Etr. Φ10/20</text>
<text x="1340.50" y="358.71" font-size="14" fill="#555" text-anchor="middle" textLength="22.0" lengthAdjust="spacingAndGlyphs" transform="rotate(-90 1340.50 353.70)">240</text>
<text x="1356.00" y="358.71" font-size="14" fill="#555" text-anchor="middle" textLength="22.0" lengthAdjust="spacingAndGlyphs" transform="rotate(-90 1356.00 353.70)">135</text>
<text x="1356.00" y="238.71" font-size="14" fill="#555" text-anchor="middle" textLength="15.5" lengthAdjust="spacingAndGlyphs" transform="rotate(-90 1356.00 233.70)">55</text>
<text x="1356.00" y="482.01" font-size="14" fill="#555" text-anchor="middle" textLength="15.5" lengthAdjust="spacingAndGlyphs" transform="rotate(-90 1356.00 477.00)">50</text>
<text x="1378.50" y="238.71" font-size="14" fill="#000" text-anchor="middle" textLength="34.0" lengthAdjust="spacingAndGlyphs" transform="rotate(-90 1378.50 233.70)">8Φ16</text>
<text x="1391.70" y="238.71" font-size="14" fill="#000" text-anchor="middle" textLength="72.5" lengthAdjust="spacingAndGlyphs" transform="rotate(-90 1391.70 233.70)">Etr. Φ10/20</text>
<text x="1378.50" y="362.51" font-size="14" fill="#000" text-anchor="middle" textLength="70.0" lengthAdjust="spacingAndGlyphs" transform="rotate(-90 1378.50 357.50)">2x5Φ14/25</text>
<text x="1391.70" y="362.51" font-size="14" fill="#000" text-anchor="middle" textLength="73.5" lengthAdjust="spacingAndGlyphs" transform="rotate(-90 1391.70 357.50)">Etr. Φ10/16</text>
<text x="1378.50" y="482.01" font-size="14" fill="#000" text-anchor="middle" textLength="34.0" lengthAdjust="spacingAndGlyphs" transform="rotate(-90 1378.50 477.00)">8Φ16</text>
<text x="1391.70" y="482.01" font-size="14" fill="#000" text-anchor="middle" textLength="72.5" lengthAdjust="spacingAndGlyphs" transform="rotate(-90 1391.70 477.00)">Etr. Φ10/20</text>
<text x="1188.70" y="362.73" font-size="16" fill="#ff1c1c" text-anchor="middle" textLength="101.0" lengthAdjust="spacingAndGlyphs" transform="rotate(-90 1188.70 357.00)">P129 (25/240)</text>
<text x="1441.70" y="362.73" font-size="16" fill="#ff1c1c" text-anchor="middle" textLength="101.0" lengthAdjust="spacingAndGlyphs" transform="rotate(-90 1441.70 357.00)">P130 (25/240)</text>
<text x="1512.50" y="218.71" font-size="14" fill="#555" text-anchor="middle" textLength="15.5" lengthAdjust="spacingAndGlyphs" transform="rotate(-90 1512.50 213.70)">25</text>
<text x="1161.70" y="546.31" font-size="14" fill="#555" text-anchor="middle" textLength="15.5" lengthAdjust="spacingAndGlyphs">25</text>
<text x="1415.50" y="546.31" font-size="14" fill="#555" text-anchor="middle" textLength="15.5" lengthAdjust="spacingAndGlyphs">25</text>
</svg>
<div class="abs" style="left:23px;top:540px;width:1517px;height:336px;background:#fff;border:1px solid #7a7a7a"></div>
<div class="abs" style="left:24px;top:589px;width:1513px;height:1px;background:#d4d4d4"></div>
<div class="abs" style="left:24px;top:613px;width:1513px;height:1px;background:#d4d4d4"></div>
<div class="abs" style="left:24px;top:637px;width:1513px;height:1px;background:#d4d4d4"></div>
<div class="abs" style="left:68px;top:542px;width:1px;height:23px;background:#e8e8e8"></div>
<div class="abs" style="left:68px;top:566px;width:1px;height:71px;background:#d4d4d4"></div>
<div class="abs" style="left:159px;top:542px;width:1px;height:23px;background:#e8e8e8"></div>
<div class="abs" style="left:159px;top:566px;width:1px;height:71px;background:#d4d4d4"></div>
<div class="abs" style="left:310px;top:542px;width:1px;height:23px;background:#e8e8e8"></div>
<div class="abs" style="left:310px;top:566px;width:1px;height:71px;background:#d4d4d4"></div>
<div class="abs" style="left:400px;top:542px;width:1px;height:23px;background:#e8e8e8"></div>
<div class="abs" style="left:400px;top:566px;width:1px;height:71px;background:#d4d4d4"></div>
<div class="abs" style="left:490px;top:542px;width:1px;height:23px;background:#e8e8e8"></div>
<div class="abs" style="left:490px;top:566px;width:1px;height:71px;background:#d4d4d4"></div>
<div class="abs" style="left:595px;top:542px;width:1px;height:23px;background:#e8e8e8"></div>
<div class="abs" style="left:595px;top:566px;width:1px;height:71px;background:#d4d4d4"></div>
<div class="abs" style="left:715px;top:542px;width:1px;height:23px;background:#e8e8e8"></div>
<div class="abs" style="left:715px;top:566px;width:1px;height:71px;background:#d4d4d4"></div>
<div class="abs" style="left:820px;top:542px;width:1px;height:23px;background:#e8e8e8"></div>
<div class="abs" style="left:820px;top:566px;width:1px;height:71px;background:#d4d4d4"></div>
<div class="abs" style="left:925px;top:542px;width:1px;height:23px;background:#e8e8e8"></div>
<div class="abs" style="left:925px;top:566px;width:1px;height:71px;background:#d4d4d4"></div>
<div class="abs" style="left:1045px;top:542px;width:1px;height:23px;background:#e8e8e8"></div>
<div class="abs" style="left:1045px;top:566px;width:1px;height:71px;background:#d4d4d4"></div>
<div class="abs" style="left:1165px;top:542px;width:1px;height:23px;background:#e8e8e8"></div>
<div class="abs" style="left:1165px;top:566px;width:1px;height:71px;background:#d4d4d4"></div>
<div class="abs" style="left:1285px;top:542px;width:1px;height:23px;background:#e8e8e8"></div>
<div class="abs" style="left:1285px;top:566px;width:1px;height:71px;background:#d4d4d4"></div>
<div class="abs" style="left:1405px;top:542px;width:1px;height:23px;background:#e8e8e8"></div>
<div class="abs" style="left:1405px;top:566px;width:1px;height:71px;background:#d4d4d4"></div>
<div class="abs" style="left:1537px;top:542px;width:1px;height:23px;background:#e8e8e8"></div>
<div class="abs" style="left:1537px;top:566px;width:1px;height:71px;background:#d4d4d4"></div>
<span class="t" style="left:31.0px;top:548.1px;font-size:13px;color:#000;transform:scaleX(0.858);transform-origin:0 0;">DS</span>
<span class="t" style="left:76.5px;top:548.1px;font-size:13px;color:#000;transform:scaleX(0.944);transform-origin:0 0;">İsim</span>
<span class="t" style="left:166.5px;top:548.1px;font-size:13px;color:#000;transform:scaleX(0.897);transform-origin:0 0;">Kat</span>
<span class="t" style="left:351.0px;top:548.1px;font-size:13px;color:#000;transform:scaleX(0.923);transform-origin:0 0;">B</span>
<span class="t" style="left:439.5px;top:548.1px;font-size:13px;color:#000;transform:scaleX(0.977);transform-origin:0 0;">lw</span>
<span class="t" style="left:534.0px;top:548.1px;font-size:13px;color:#000;transform:scaleX(0.958);transform-origin:0 0;">Sol</span>
<span class="t" style="left:642.0px;top:548.1px;font-size:13px;color:#000;transform:scaleX(1.068);transform-origin:0 0;">Orta</span>
<span class="t" style="left:757.5px;top:548.1px;font-size:13px;color:#000;transform:scaleX(0.908);transform-origin:0 0;">Sağ</span>
<span class="t" style="left:855.0px;top:548.1px;font-size:13px;color:#000;transform:scaleX(1.083);transform-origin:0 0;">Etriye</span>
<span class="t" style="left:947.0px;top:548.1px;font-size:13px;color:#000;transform:scaleX(0.943);transform-origin:0 0;">Başlık Etriyesi</span>
<span class="t" style="left:1097.5px;top:548.1px;font-size:13px;color:#000;transform:scaleX(0.943);transform-origin:0 0;">Vd</span>
<span class="t" style="left:1217.5px;top:548.1px;font-size:13px;color:#000;transform:scaleX(0.988);transform-origin:0 0;">Ve</span>
<span class="t" style="left:1338.5px;top:548.1px;font-size:13px;color:#000;transform:scaleX(1.038);transform-origin:0 0;">Vr</span>
<span class="t" style="left:1452.5px;top:548.1px;font-size:13px;color:#000;transform:scaleX(0.956);transform-origin:0 0;">VeMax</span>
<div class="abs" style="left:32px;top:567.0px;width:10px;height:10px;border:1px solid #222;background:#fff"></div>
<span class="t" style="left:76.0px;top:571.9px;font-size:13.5px;color:#a81e2e;transform:scaleX(0.951);transform-origin:0 0;text-decoration:underline;text-decoration-thickness:1px;text-underline-offset:2px;">P11(K)</span>
<span class="t" style="left:166.0px;top:571.9px;font-size:13.5px;color:#a81e2e;transform:scaleX(0.956);transform-origin:0 0;text-decoration:underline;text-decoration-thickness:1px;text-underline-offset:2px;">1. KAT</span>
<span class="t" style="left:337.5px;top:571.9px;font-size:13.5px;color:#a81e2e;transform:scaleX(0.952);transform-origin:0 0;text-decoration:underline;text-decoration-thickness:1px;text-underline-offset:2px;">25 cm</span>
<span class="t" style="left:416.0px;top:571.9px;font-size:13.5px;color:#a81e2e;transform:scaleX(0.936);transform-origin:0 0;text-decoration:underline;text-decoration-thickness:1px;text-underline-offset:2px;">257.61 cm</span>
<span class="t" style="left:527.8px;top:571.9px;font-size:13.5px;color:#a81e2e;transform:scaleX(0.924);transform-origin:0 0;text-decoration:underline;text-decoration-thickness:1px;text-underline-offset:2px;">8Ø16</span>
<span class="t" style="left:634.5px;top:571.9px;font-size:13.5px;color:#a81e2e;transform:scaleX(0.948);transform-origin:0 0;text-decoration:underline;text-decoration-thickness:1px;text-underline-offset:2px;">Ø14/25</span>
<span class="t" style="left:752.8px;top:571.9px;font-size:13.5px;color:#a81e2e;transform:scaleX(0.924);transform-origin:0 0;text-decoration:underline;text-decoration-thickness:1px;text-underline-offset:2px;">8Ø16</span>
<span class="t" style="left:852.0px;top:571.9px;font-size:13.5px;color:#a81e2e;transform:scaleX(0.948);transform-origin:0 0;text-decoration:underline;text-decoration-thickness:1px;text-underline-offset:2px;">Ø10/25</span>
<span class="t" style="left:964.5px;top:571.9px;font-size:13.5px;color:#a81e2e;transform:scaleX(0.948);transform-origin:0 0;text-decoration:underline;text-decoration-thickness:1px;text-underline-offset:2px;">Ø10/20</span>
<span class="t" style="left:1082.8px;top:571.9px;font-size:13.5px;color:#a81e2e;transform:scaleX(0.912);transform-origin:0 0;text-decoration:underline;text-decoration-thickness:1px;text-underline-offset:2px;">158.153</span>
<span class="t" style="left:1206.0px;top:571.9px;font-size:13.5px;color:#a81e2e;transform:scaleX(0.920);transform-origin:0 0;text-decoration:underline;text-decoration-thickness:1px;text-underline-offset:2px;">238.86</span>
<span class="t" style="left:1322.8px;top:571.9px;font-size:13.5px;color:#a81e2e;transform:scaleX(0.912);transform-origin:0 0;text-decoration:underline;text-decoration-thickness:1px;text-underline-offset:2px;">135.469</span>
<span class="t" style="left:1449.2px;top:571.9px;font-size:13.5px;color:#a81e2e;transform:scaleX(0.912);transform-origin:0 0;text-decoration:underline;text-decoration-thickness:1px;text-underline-offset:2px;">421.382</span>
<div class="abs" style="left:32px;top:591.0px;width:10px;height:10px;border:1px solid #222;background:#fff"></div>
<span class="t" style="left:76.0px;top:595.9px;font-size:13.5px;color:#000;transform:scaleX(0.957);transform-origin:0 0;">P29</span>
<span class="t" style="left:166.0px;top:595.9px;font-size:13.5px;color:#000;transform:scaleX(0.956);transform-origin:0 0;">1. KAT</span>
<span class="t" style="left:337.5px;top:595.9px;font-size:13.5px;color:#000;transform:scaleX(0.952);transform-origin:0 0;">25 cm</span>
<span class="t" style="left:424.2px;top:595.9px;font-size:13.5px;color:#000;transform:scaleX(0.960);transform-origin:0 0;">240 cm</span>
<span class="t" style="left:527.8px;top:595.9px;font-size:13.5px;color:#000;transform:scaleX(0.924);transform-origin:0 0;">8Ø16</span>
<span class="t" style="left:634.5px;top:595.9px;font-size:13.5px;color:#000;transform:scaleX(0.948);transform-origin:0 0;">Ø14/25</span>
<span class="t" style="left:752.8px;top:595.9px;font-size:13.5px;color:#000;transform:scaleX(0.924);transform-origin:0 0;">8Ø16</span>
<span class="t" style="left:852.0px;top:595.9px;font-size:13.5px;color:#000;transform:scaleX(0.948);transform-origin:0 0;">Ø10/15</span>
<span class="t" style="left:964.5px;top:595.9px;font-size:13.5px;color:#000;transform:scaleX(0.948);transform-origin:0 0;">Ø10/20</span>
<span class="t" style="left:1086.2px;top:595.9px;font-size:13.5px;color:#000;transform:scaleX(0.908);transform-origin:0 0;">95.575</span>
<span class="t" style="left:1206.0px;top:595.9px;font-size:13.5px;color:#000;transform:scaleX(0.920);transform-origin:0 0;">149.55</span>
<span class="t" style="left:1322.8px;top:595.9px;font-size:13.5px;color:#000;transform:scaleX(0.912);transform-origin:0 0;">155.359</span>
<span class="t" style="left:1449.2px;top:595.9px;font-size:13.5px;color:#000;transform:scaleX(0.912);transform-origin:0 0;">346.128</span>
<div class="abs" style="left:32px;top:615.0px;width:10px;height:10px;border:1px solid #222;background:#fff"></div>
<span class="t" style="left:76.0px;top:619.9px;font-size:13.5px;color:#000;transform:scaleX(0.957);transform-origin:0 0;">P30</span>
<span class="t" style="left:166.0px;top:619.9px;font-size:13.5px;color:#000;transform:scaleX(0.956);transform-origin:0 0;">1. KAT</span>
<span class="t" style="left:337.5px;top:619.9px;font-size:13.5px;color:#000;transform:scaleX(0.952);transform-origin:0 0;">25 cm</span>
<span class="t" style="left:424.2px;top:619.9px;font-size:13.5px;color:#000;transform:scaleX(0.960);transform-origin:0 0;">240 cm</span>
<span class="t" style="left:527.8px;top:619.9px;font-size:13.5px;color:#000;transform:scaleX(0.924);transform-origin:0 0;">8Ø16</span>
<span class="t" style="left:634.5px;top:619.9px;font-size:13.5px;color:#000;transform:scaleX(0.948);transform-origin:0 0;">Ø14/25</span>
<span class="t" style="left:752.8px;top:619.9px;font-size:13.5px;color:#000;transform:scaleX(0.924);transform-origin:0 0;">8Ø16</span>
<span class="t" style="left:852.0px;top:619.9px;font-size:13.5px;color:#000;transform:scaleX(0.948);transform-origin:0 0;">Ø10/16</span>
<span class="t" style="left:964.5px;top:619.9px;font-size:13.5px;color:#000;transform:scaleX(0.948);transform-origin:0 0;">Ø10/20</span>
<span class="t" style="left:1086.2px;top:619.9px;font-size:13.5px;color:#000;transform:scaleX(0.908);transform-origin:0 0;">95.575</span>
<span class="t" style="left:1202.8px;top:619.9px;font-size:13.5px;color:#000;transform:scaleX(0.912);transform-origin:0 0;">149.549</span>
<span class="t" style="left:1322.8px;top:619.9px;font-size:13.5px;color:#000;transform:scaleX(0.912);transform-origin:0 0;">151.249</span>
<span class="t" style="left:1449.2px;top:619.9px;font-size:13.5px;color:#000;transform:scaleX(0.912);transform-origin:0 0;">355.884</span>
<div class="abs" style="left:24px;top:565px;width:1514px;height:25px;border:1px dotted #222"></div>
<div class="abs" style="left:1077px;top:909px;width:14px;height:14px;border:1px solid #333;border-radius:3px;background:#fff"></div>
<span class="t" style="left:1095.0px;top:910.1px;font-size:13px;color:#000;transform:scaleX(0.991);transform-origin:0 0;">Tüm Katlar</span>
<div class="abs" style="left:1176px;top:904px;width:86px;height:25px;border:1px solid #d0d0d0;border-radius:4px;background:#fdfdfd"></div>
<div class="abs" style="left:1275px;top:904px;width:86px;height:25px;border:1px solid #d0d0d0;border-radius:4px;background:#fdfdfd"></div>
<div class="abs" style="left:1374px;top:904px;width:86px;height:25px;border:1.5px solid #0067c0;border-radius:4px;background:#fdfdfd"></div>
<div class="abs" style="left:1469px;top:904px;width:86px;height:25px;border:1px solid #d0d0d0;border-radius:4px;background:#fdfdfd"></div>
<span class="t" style="left:1210.0px;top:910.1px;font-size:13px;color:#000;transform:scaleX(1.185);transform-origin:0 0;">&lt;&lt;</span>
<span class="t" style="left:1309.0px;top:910.1px;font-size:13px;color:#000;transform:scaleX(1.185);transform-origin:0 0;">&gt;&gt;</span>
<span class="t" style="left:1395.0px;top:910.1px;font-size:13px;color:#000;transform:scaleX(1.032);transform-origin:0 0;">Tamam</span>
<span class="t" style="left:1499.5px;top:910.1px;font-size:13px;color:#000;transform:scaleX(1.017);transform-origin:0 0;">İptal</span>
</div>
</div></body></html>
